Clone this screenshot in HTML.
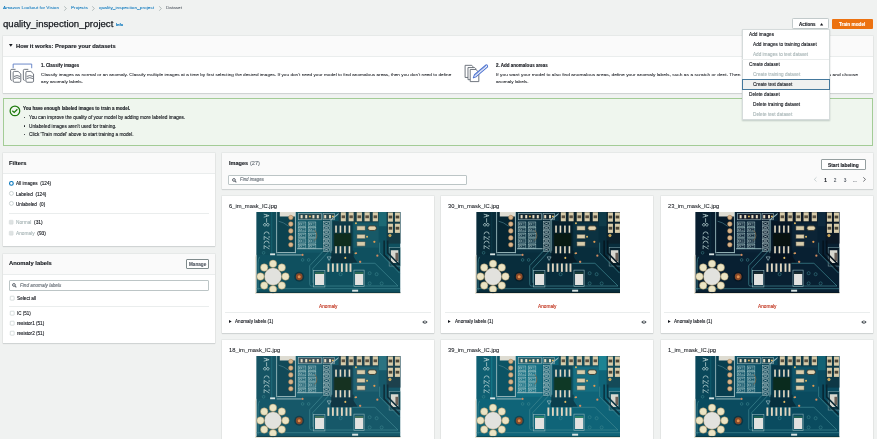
<!DOCTYPE html>
<html><head><meta charset="utf-8">
<style>
*{box-sizing:border-box;margin:0;padding:0}
html,body{width:877px;height:439px;overflow:hidden;background:#f0f2f1;font-family:"Liberation Sans",sans-serif;color:#16191f}
.a{position:absolute;white-space:nowrap;transform-origin:0 0;-webkit-text-stroke:0.12px currentColor}
#root{position:absolute;left:0;top:0;width:877px;height:439px;will-change:transform}
.panel{position:absolute;background:#fff;box-shadow:0 1px 1px 0 rgba(0,28,36,.10),0 0 0 0.6px rgba(0,28,36,.07)}
.ph{position:absolute;left:0;right:0;top:0;background:#fafafa;border-bottom:0.6px solid #eaeded}
</style></head><body><div id="root">
<svg width="0" height="0" style="position:absolute"><defs><symbol id="pcb0" viewBox="0 0 146 82" preserveAspectRatio="none">
<path d="M0 45 L1.6 40 V80 H146 V82 H0Z" fill="#e9e4d6"/>
<g transform="translate(1.6,0) scale(1.0025,1.016)">
<rect x="0" y="0" width="143.7" height="79.4" fill="#0f505f"/>
<!-- left strip -->
<rect x="0" y="0" width="19.8" height="42" fill="#0f4c5a"/>
<rect x="14.5" y="0" width="1.2" height="42" fill="#155f6b"/>
<g fill="none" stroke="#b9d2d2" stroke-width="0.75" stroke-linecap="round">
<path d="M7.5 2.2 L12.5 3.6 L7.5 5 M10 2.9 V4.3"/>
<path d="M10 6.5 V10"/>
<path d="M8.2 11.3 a1.4 1.2 0 1 0 0.01 0 M11.2 11.3 a1.4 1.2 0 1 0 0.01 0"/>
<path d="M12.5 21.5 A2.5 2 0 0 0 7.5 21.5"/>
<path d="M7.5 24 L12.5 27 M7.5 24.5 V27 M12.5 24 V25"/>
<path d="M12.5 30.5 A2.5 2 0 0 0 7.5 30.5"/>
<path d="M7.5 33 L12.5 36 M7.5 33.5 V36 M12.5 33 V34"/>
</g>

<rect x="19.6" y="0" width="1.1" height="40.5" fill="#9ab8bc"/>
<rect x="20.7" y="0" width="17.6" height="39.6" fill="#0c424f"/>
<rect x="20.7" y="39.3" width="18.6" height="1" fill="#9ab8bc"/>
<rect x="38.3" y="0" width="1" height="40.3" fill="#9ab8bc"/>
<path d="M22 9 q5 1 10 5" stroke="#4f8590" stroke-width="0.6" fill="none"/>
<rect x="23.2" y="0" width="15.5" height="4.4" fill="#dedcd2"/>
<g fill="#d9b58c" stroke="#a87a4c" stroke-width="0.5">
<circle cx="34.2" cy="5.4" r="2.2"/><circle cx="34.2" cy="11.8" r="2.3"/><circle cx="34.2" cy="18.6" r="2.3"/><circle cx="34.2" cy="25.4" r="2.3"/><circle cx="34.2" cy="32.1" r="2.3"/>
</g>
<!-- text block R18 R16 -->
<rect x="40" y="0" width="26" height="40" fill="#135867"/>
<rect x="41.8" y="1.6" width="23.2" height="6" fill="#2a494f" stroke="#9ab8bc" stroke-width="0.6"/>
<g fill="#e6dcc4"><rect x="44" y="3" width="2" height="3.2"/><rect x="48.6" y="3" width="2" height="3.2"/><rect x="55.8" y="3" width="2" height="3.2"/><rect x="60.2" y="3" width="2" height="3.2"/></g>
<circle cx="53.3" cy="4.5" r="1" fill="#e0b860"/>
<g><rect x="41.6" y="9.8" width="7.6" height="4.2" fill="none" stroke="#a9c9ca" stroke-width="0.55"/><path d="M42.800000000000004 11.0 h2 v1.8 h-2z M45.800000000000004 11.0 h2.2 M45.800000000000004 12.8 h2.2" fill="none" stroke="#c8dcdc" stroke-width="0.5"/><rect x="51.6" y="9.8" width="7.6" height="4.2" fill="none" stroke="#a9c9ca" stroke-width="0.55"/><path d="M52.800000000000004 11.0 h2 v1.8 h-2z M55.800000000000004 11.0 h2.2 M55.800000000000004 12.8 h2.2" fill="none" stroke="#c8dcdc" stroke-width="0.5"/><rect x="41.6" y="15.3" width="7.6" height="4.2" fill="none" stroke="#a9c9ca" stroke-width="0.55"/><path d="M42.800000000000004 16.5 h2 v1.8 h-2z M45.800000000000004 16.5 h2.2 M45.800000000000004 18.3 h2.2" fill="none" stroke="#c8dcdc" stroke-width="0.5"/><rect x="51.6" y="15.3" width="7.6" height="4.2" fill="none" stroke="#a9c9ca" stroke-width="0.55"/><path d="M52.800000000000004 16.5 h2 v1.8 h-2z M55.800000000000004 16.5 h2.2 M55.800000000000004 18.3 h2.2" fill="none" stroke="#c8dcdc" stroke-width="0.5"/><rect x="41.6" y="20.8" width="7.6" height="4.2" fill="none" stroke="#a9c9ca" stroke-width="0.55"/><path d="M42.800000000000004 22.0 h2 v1.8 h-2z M45.800000000000004 22.0 h2.2 M45.800000000000004 23.8 h2.2" fill="none" stroke="#c8dcdc" stroke-width="0.5"/><rect x="51.6" y="20.8" width="7.6" height="4.2" fill="none" stroke="#a9c9ca" stroke-width="0.55"/><path d="M52.800000000000004 22.0 h2 v1.8 h-2z M55.800000000000004 22.0 h2.2 M55.800000000000004 23.8 h2.2" fill="none" stroke="#c8dcdc" stroke-width="0.5"/><rect x="41.6" y="26.3" width="7.6" height="4.2" fill="none" stroke="#a9c9ca" stroke-width="0.55"/><path d="M42.800000000000004 27.5 h2 v1.8 h-2z M45.800000000000004 27.5 h2.2 M45.800000000000004 29.3 h2.2" fill="none" stroke="#c8dcdc" stroke-width="0.5"/><rect x="51.6" y="26.3" width="7.6" height="4.2" fill="none" stroke="#a9c9ca" stroke-width="0.55"/><path d="M52.800000000000004 27.5 h2 v1.8 h-2z M55.800000000000004 27.5 h2.2 M55.800000000000004 29.3 h2.2" fill="none" stroke="#c8dcdc" stroke-width="0.5"/><rect x="41.6" y="31.6" width="7.6" height="4.2" fill="none" stroke="#a9c9ca" stroke-width="0.55"/><path d="M42.800000000000004 32.800000000000004 h2 v1.8 h-2z M45.800000000000004 32.800000000000004 h2.2 M45.800000000000004 34.6 h2.2" fill="none" stroke="#c8dcdc" stroke-width="0.5"/><rect x="51.6" y="31.6" width="7.6" height="4.2" fill="none" stroke="#a9c9ca" stroke-width="0.55"/><path d="M52.800000000000004 32.800000000000004 h2 v1.8 h-2z M55.800000000000004 32.800000000000004 h2.2 M55.800000000000004 34.6 h2.2" fill="none" stroke="#c8dcdc" stroke-width="0.5"/></g>
<path d="M58 18 a5 6 0 0 1 0 10" stroke="#7a6a50" stroke-width="0.8" fill="none"/>
<rect x="40.5" y="35.5" width="30" height="1" fill="#8fb3b8"/>
<!-- small resistor column -->
<rect x="66" y="0" width="8" height="40" fill="#0f4755"/>
<rect x="66.4" y="1.6" width="11.6" height="6" fill="#2a494f" stroke="#9ab8bc" stroke-width="0.6"/>
<g fill="#e6dcc4"><rect x="67.6" y="3" width="2" height="3.2"/><rect x="72.4" y="3" width="2" height="3.2"/></g>
<circle cx="76.3" cy="4.5" r="1" fill="#e0b860"/>
<g><rect x="66.8" y="9.5" width="6" height="3.4" fill="none" stroke="#b8cfd0" stroke-width="0.5"/><path d="M67.6 10.1 l4.4 2.2 M67.6 12.3 l4.4 -2.2" stroke="#d0dede" stroke-width="0.5"/><rect x="66.8" y="13.8" width="6" height="3.4" fill="none" stroke="#b8cfd0" stroke-width="0.5"/><path d="M67.6 14.4 l4.4 2.2 M67.6 16.6 l4.4 -2.2" stroke="#d0dede" stroke-width="0.5"/><rect x="66.8" y="18.1" width="6" height="3.4" fill="none" stroke="#b8cfd0" stroke-width="0.5"/><path d="M67.6 18.700000000000003 l4.4 2.2 M67.6 20.900000000000002 l4.4 -2.2" stroke="#d0dede" stroke-width="0.5"/><rect x="66.8" y="22.4" width="6" height="3.4" fill="none" stroke="#b8cfd0" stroke-width="0.5"/><path d="M67.6 23.0 l4.4 2.2 M67.6 25.2 l4.4 -2.2" stroke="#d0dede" stroke-width="0.5"/><rect x="66.8" y="26.7" width="6" height="3.4" fill="none" stroke="#b8cfd0" stroke-width="0.5"/><path d="M67.6 27.3 l4.4 2.2 M67.6 29.5 l4.4 -2.2" stroke="#d0dede" stroke-width="0.5"/><rect x="66.8" y="31.0" width="6" height="3.4" fill="none" stroke="#b8cfd0" stroke-width="0.5"/><path d="M67.6 31.6 l4.4 2.2 M67.6 33.8 l4.4 -2.2" stroke="#d0dede" stroke-width="0.5"/><rect x="66.8" y="35.3" width="6" height="3.4" fill="none" stroke="#b8cfd0" stroke-width="0.5"/><path d="M67.6 35.9 l4.4 2.2 M67.6 38.099999999999994 l4.4 -2.2" stroke="#d0dede" stroke-width="0.5"/></g>
<rect x="73.9" y="8" width="1" height="32" fill="#8fb3b8"/>
<path d="M74 8 L84 0" stroke="#9ab8bc" stroke-width="1" fill="none"/>
<!-- IC -->
<path d="M75 38 H97 V44 L101 50 H74Z" fill="#0b323e"/>
<rect x="76" y="9" width="20" height="32" fill="#0e3946"/>
<g fill="#e6dcc4">
<rect x="78.6" y="13.3" width="1.6" height="7"/><rect x="83" y="13.3" width="1.6" height="7"/><rect x="87.5" y="13.3" width="1.6" height="7"/><rect x="92" y="13.3" width="1.6" height="7"/>
<rect x="78.6" y="33.5" width="1.6" height="7"/><rect x="83" y="33.5" width="1.6" height="7"/><rect x="87.5" y="33.5" width="1.6" height="7"/><rect x="92" y="33.5" width="1.6" height="7"/>
</g>
<rect x="77.6" y="21" width="17" height="12.4" fill="#0f2d1e"/>
<!-- top resistor row -->
<rect x="82" y="0" width="42" height="10" fill="#173e48"/>
<g fill="#d8ccaa">
<rect x="84.2" y="0.3" width="5" height="8.8"/><rect x="92" y="0.3" width="5" height="8.8"/><rect x="100.1" y="0.3" width="5.2" height="8.8"/><rect x="107.9" y="0.3" width="5.2" height="8.8"/><rect x="116.1" y="0.3" width="5.2" height="8.8"/>
</g>
<g fill="#5a5040"><rect x="85" y="3.3" width="3.4" height="2.8"/><rect x="92.8" y="3.3" width="3.4" height="2.8"/><rect x="100.9" y="3.3" width="3.6" height="2.8"/><rect x="108.7" y="3.3" width="3.6" height="2.8"/><rect x="116.9" y="3.3" width="3.6" height="2.8"/></g>
<rect x="122" y="0" width="8.6" height="14" fill="#1d6974"/>
<!-- right resistor columns -->
<rect x="130" y="0" width="14" height="31" fill="#143b46"/>
<g fill="#d8ccaa">
<rect x="131.3" y="0.5" width="5" height="9"/><rect x="138.3" y="0.5" width="5" height="9"/>
<rect x="131.3" y="11.5" width="5" height="9"/><rect x="138.3" y="11.5" width="5" height="9"/>
</g>
<g fill="#4a4436"><rect x="132" y="3.5" width="3.6" height="2.8"/><rect x="139" y="3.5" width="3.6" height="2.8"/><rect x="132" y="14.5" width="3.6" height="2.8"/><rect x="139" y="14.5" width="3.6" height="2.8"/></g>
<circle cx="133.3" cy="23" r="1.3" fill="#c9a050" stroke="#e8c878" stroke-width="0.5"/>
<!-- mid horiz components -->
<rect x="97" y="11" width="25" height="24" fill="#175967"/>
<g fill="#d8ccaa" stroke="#1a3b42" stroke-width="0.6">
<rect x="100.1" y="13.6" width="8.6" height="4.5" rx="0.6"/>
<rect x="100.1" y="21.8" width="8.6" height="4.5" rx="0.6"/>
<rect x="100.1" y="29" width="8.6" height="4.5" rx="0.6"/>
</g>
<rect x="111.2" y="13.6" width="8.6" height="4.5" rx="2.2" fill="#e2d4b0" stroke="#2a2a22" stroke-width="0.8"/>
<g fill="#e0b860"><circle cx="99.3" cy="11.1" r="1"/><circle cx="110.4" cy="24.2" r="1"/></g>
<circle cx="117.7" cy="29.2" r="1.1" fill="#e09a50"/>
<rect x="132.5" y="35" width="11.2" height="18" fill="#0c3d4a" stroke="#8fb3b8" stroke-width="0.5"/>
<rect x="134.2" y="37.5" width="7.5" height="12.5" fill="#d8d8d0"/>
<rect x="138.8" y="40" width="2.8" height="8" fill="#6a6058"/>
<!-- traces -->
<g stroke="#3f8690" stroke-width="0.7" fill="none">
<path d="M68.6 36.3 L53.1 52.7 V71 Q53.1 72.6 54.7 72.6 H141.4 L118.3 50.3 H95.8"/><path d="M73.1 37.7 L56.2 55.5 V69.5"/>
<path d="M0 75.2 H143.5"/>
<path d="M3 44 Q1.5 46 1.5 50 V77"/>
<path d="M123 30 V40 L143 60"/>
</g>
<g stroke="#0a2934" stroke-width="1.6" fill="none"><path d="M127.5 28 V42 L143 57.5"/><path d="M131 28 V40 L143 52"/></g>
<g fill="#d8e4e4"><rect x="95.5" y="76.2" width="6" height="2"/><rect x="13.5" y="40.6" width="5" height="1.8"/></g>
<rect x="20" y="41.6" width="25" height="1" fill="#8fb3b8"/>
<circle cx="45.9" cy="42.1" r="1.1" fill="#d08a60"/>
<circle cx="120.7" cy="42.8" r="1.1" fill="#d08a60"/>
<circle cx="103.6" cy="48.8" r="1.1" fill="#d08a60"/>
<circle cx="98.8" cy="40.5" r="0.9" fill="#e0b860"/>
<g fill="#e0b860"><circle cx="88.7" cy="45" r="1"/></g>
<g fill="#d08a60"><circle cx="99.6" cy="40.4" r="0.9"/><circle cx="103.3" cy="48.6" r="0.9"/></g>
<!-- pins row -->
<g fill="#e2d6c0">
<rect x="70.8" y="50.5" width="1.9" height="8.2"/><rect x="75.3" y="50.5" width="1.9" height="8.2"/><rect x="79.8" y="50.5" width="1.9" height="8.2"/><rect x="84.3" y="50.5" width="1.9" height="8.2"/><rect x="88.9" y="50.5" width="1.9" height="8.2"/><rect x="92.9" y="50.5" width="1.9" height="8.2"/>
</g>
<path d="M70.5 44 h4 l-2 3.5z" fill="none" stroke="#a8c4c8" stroke-width="0.6"/>
<!-- SMD white -->
<rect x="56.8" y="57.5" width="11.5" height="16" fill="none" stroke="#8fb3b8" stroke-width="0.6"/>
<rect x="58.4" y="60.6" width="9" height="11" fill="#e2e2e0"/>
<rect x="58.4" y="58.8" width="9" height="2" fill="#2e6955"/>
<rect x="97.3" y="57" width="10.2" height="16" fill="none" stroke="#8fb3b8" stroke-width="0.6"/>
<rect x="98.4" y="60.6" width="8.2" height="11" fill="#e2e2e0"/>
<rect x="98.4" y="58.8" width="8.2" height="2" fill="#2e6955"/>
<!-- big pad -->
<g fill="#ebe4c4" stroke="#9a8050" stroke-width="0.45">
<circle cx="16.4" cy="50.8" r="3.7"/><circle cx="25.2" cy="54.5" r="3.7"/><circle cx="28.9" cy="63.3" r="3.7"/><circle cx="25.2" cy="72.1" r="3.7"/><circle cx="16.4" cy="75.8" r="3.7"/><circle cx="7.6" cy="72.1" r="3.7"/><circle cx="3.9" cy="63.3" r="3.7"/><circle cx="7.6" cy="54.5" r="3.7"/>
</g>
<circle cx="16.4" cy="63.3" r="8.6" fill="#e2e2de" stroke="#9a8050" stroke-width="0.45"/>
<circle cx="42.6" cy="63.5" r="5" fill="#0c3946"/>
<circle cx="42.6" cy="63.5" r="3.4" fill="#8a4a28"/>
<circle cx="42.6" cy="63.5" r="1.5" fill="#e09050"/>
<g fill="none" stroke="#3f8a92" stroke-width="0.5">
<circle cx="113" cy="60" r="1.5"/><circle cx="120" cy="61" r="1.5"/><circle cx="113" cy="70" r="1.5"/><circle cx="125" cy="70" r="1.5"/>
<circle cx="84" cy="61" r="1.5"/><circle cx="46" cy="47" r="1.3"/><circle cx="52" cy="47" r="1.3"/><circle cx="7" cy="40" r="1.3"/>
</g>
<rect x="0" y="78.4" width="143.7" height="1" fill="#0e3b46"/>
</g>
</symbol><symbol id="pcb1" viewBox="0 0 146 82" preserveAspectRatio="none">
<path d="M0 45 L1.6 40 V80 H146 V82 H0Z" fill="#e9e4d6"/>
<g transform="translate(1.6,0) scale(1.0025,1.016)">
<rect x="0" y="0" width="143.7" height="79.4" fill="#082d3c"/>
<!-- left strip -->
<rect x="0" y="0" width="19.8" height="42" fill="#082b39"/>
<rect x="14.5" y="0" width="1.2" height="42" fill="#0b3543"/>
<g fill="none" stroke="#b9d2d2" stroke-width="0.75" stroke-linecap="round">
<path d="M7.5 2.2 L12.5 3.6 L7.5 5 M10 2.9 V4.3"/>
<path d="M10 6.5 V10"/>
<path d="M8.2 11.3 a1.4 1.2 0 1 0 0.01 0 M11.2 11.3 a1.4 1.2 0 1 0 0.01 0"/>
<path d="M12.5 21.5 A2.5 2 0 0 0 7.5 21.5"/>
<path d="M7.5 24 L12.5 27 M7.5 24.5 V27 M12.5 24 V25"/>
<path d="M12.5 30.5 A2.5 2 0 0 0 7.5 30.5"/>
<path d="M7.5 33 L12.5 36 M7.5 33.5 V36 M12.5 33 V34"/>
</g>

<rect x="19.6" y="0" width="1.1" height="40.5" fill="#9ab8bc"/>
<rect x="20.7" y="0" width="17.6" height="39.6" fill="#062532"/>
<rect x="20.7" y="39.3" width="18.6" height="1" fill="#9ab8bc"/>
<rect x="38.3" y="0" width="1" height="40.3" fill="#9ab8bc"/>
<path d="M22 9 q5 1 10 5" stroke="#4f8590" stroke-width="0.6" fill="none"/>
<rect x="23.2" y="0" width="15.5" height="4.4" fill="#dedcd2"/>
<g fill="#d9b58c" stroke="#a87a4c" stroke-width="0.5">
<circle cx="34.2" cy="5.4" r="2.2"/><circle cx="34.2" cy="11.8" r="2.3"/><circle cx="34.2" cy="18.6" r="2.3"/><circle cx="34.2" cy="25.4" r="2.3"/><circle cx="34.2" cy="32.1" r="2.3"/>
</g>
<!-- text block R18 R16 -->
<rect x="40" y="0" width="26" height="40" fill="#0a3141"/>
<rect x="41.8" y="1.6" width="23.2" height="6" fill="#162932" stroke="#9ab8bc" stroke-width="0.6"/>
<g fill="#e6dcc4"><rect x="44" y="3" width="2" height="3.2"/><rect x="48.6" y="3" width="2" height="3.2"/><rect x="55.8" y="3" width="2" height="3.2"/><rect x="60.2" y="3" width="2" height="3.2"/></g>
<circle cx="53.3" cy="4.5" r="1" fill="#e0b860"/>
<g><rect x="41.6" y="9.8" width="7.6" height="4.2" fill="none" stroke="#a9c9ca" stroke-width="0.55"/><path d="M42.800000000000004 11.0 h2 v1.8 h-2z M45.800000000000004 11.0 h2.2 M45.800000000000004 12.8 h2.2" fill="none" stroke="#c8dcdc" stroke-width="0.5"/><rect x="51.6" y="9.8" width="7.6" height="4.2" fill="none" stroke="#a9c9ca" stroke-width="0.55"/><path d="M52.800000000000004 11.0 h2 v1.8 h-2z M55.800000000000004 11.0 h2.2 M55.800000000000004 12.8 h2.2" fill="none" stroke="#c8dcdc" stroke-width="0.5"/><rect x="41.6" y="15.3" width="7.6" height="4.2" fill="none" stroke="#a9c9ca" stroke-width="0.55"/><path d="M42.800000000000004 16.5 h2 v1.8 h-2z M45.800000000000004 16.5 h2.2 M45.800000000000004 18.3 h2.2" fill="none" stroke="#c8dcdc" stroke-width="0.5"/><rect x="51.6" y="15.3" width="7.6" height="4.2" fill="none" stroke="#a9c9ca" stroke-width="0.55"/><path d="M52.800000000000004 16.5 h2 v1.8 h-2z M55.800000000000004 16.5 h2.2 M55.800000000000004 18.3 h2.2" fill="none" stroke="#c8dcdc" stroke-width="0.5"/><rect x="41.6" y="20.8" width="7.6" height="4.2" fill="none" stroke="#a9c9ca" stroke-width="0.55"/><path d="M42.800000000000004 22.0 h2 v1.8 h-2z M45.800000000000004 22.0 h2.2 M45.800000000000004 23.8 h2.2" fill="none" stroke="#c8dcdc" stroke-width="0.5"/><rect x="51.6" y="20.8" width="7.6" height="4.2" fill="none" stroke="#a9c9ca" stroke-width="0.55"/><path d="M52.800000000000004 22.0 h2 v1.8 h-2z M55.800000000000004 22.0 h2.2 M55.800000000000004 23.8 h2.2" fill="none" stroke="#c8dcdc" stroke-width="0.5"/><rect x="41.6" y="26.3" width="7.6" height="4.2" fill="none" stroke="#a9c9ca" stroke-width="0.55"/><path d="M42.800000000000004 27.5 h2 v1.8 h-2z M45.800000000000004 27.5 h2.2 M45.800000000000004 29.3 h2.2" fill="none" stroke="#c8dcdc" stroke-width="0.5"/><rect x="51.6" y="26.3" width="7.6" height="4.2" fill="none" stroke="#a9c9ca" stroke-width="0.55"/><path d="M52.800000000000004 27.5 h2 v1.8 h-2z M55.800000000000004 27.5 h2.2 M55.800000000000004 29.3 h2.2" fill="none" stroke="#c8dcdc" stroke-width="0.5"/><rect x="41.6" y="31.6" width="7.6" height="4.2" fill="none" stroke="#a9c9ca" stroke-width="0.55"/><path d="M42.800000000000004 32.800000000000004 h2 v1.8 h-2z M45.800000000000004 32.800000000000004 h2.2 M45.800000000000004 34.6 h2.2" fill="none" stroke="#c8dcdc" stroke-width="0.5"/><rect x="51.6" y="31.6" width="7.6" height="4.2" fill="none" stroke="#a9c9ca" stroke-width="0.55"/><path d="M52.800000000000004 32.800000000000004 h2 v1.8 h-2z M55.800000000000004 32.800000000000004 h2.2 M55.800000000000004 34.6 h2.2" fill="none" stroke="#c8dcdc" stroke-width="0.5"/></g>
<path d="M58 18 a5 6 0 0 1 0 10" stroke="#7a6a50" stroke-width="0.8" fill="none"/>
<rect x="40.5" y="35.5" width="30" height="1" fill="#8fb3b8"/>
<!-- small resistor column -->
<rect x="66" y="0" width="8" height="40" fill="#082836"/>
<rect x="66.4" y="1.6" width="11.6" height="6" fill="#162932" stroke="#9ab8bc" stroke-width="0.6"/>
<g fill="#e6dcc4"><rect x="67.6" y="3" width="2" height="3.2"/><rect x="72.4" y="3" width="2" height="3.2"/></g>
<circle cx="76.3" cy="4.5" r="1" fill="#e0b860"/>
<g><rect x="66.8" y="9.5" width="6" height="3.4" fill="none" stroke="#b8cfd0" stroke-width="0.5"/><path d="M67.6 10.1 l4.4 2.2 M67.6 12.3 l4.4 -2.2" stroke="#d0dede" stroke-width="0.5"/><rect x="66.8" y="13.8" width="6" height="3.4" fill="none" stroke="#b8cfd0" stroke-width="0.5"/><path d="M67.6 14.4 l4.4 2.2 M67.6 16.6 l4.4 -2.2" stroke="#d0dede" stroke-width="0.5"/><rect x="66.8" y="18.1" width="6" height="3.4" fill="none" stroke="#b8cfd0" stroke-width="0.5"/><path d="M67.6 18.700000000000003 l4.4 2.2 M67.6 20.900000000000002 l4.4 -2.2" stroke="#d0dede" stroke-width="0.5"/><rect x="66.8" y="22.4" width="6" height="3.4" fill="none" stroke="#b8cfd0" stroke-width="0.5"/><path d="M67.6 23.0 l4.4 2.2 M67.6 25.2 l4.4 -2.2" stroke="#d0dede" stroke-width="0.5"/><rect x="66.8" y="26.7" width="6" height="3.4" fill="none" stroke="#b8cfd0" stroke-width="0.5"/><path d="M67.6 27.3 l4.4 2.2 M67.6 29.5 l4.4 -2.2" stroke="#d0dede" stroke-width="0.5"/><rect x="66.8" y="31.0" width="6" height="3.4" fill="none" stroke="#b8cfd0" stroke-width="0.5"/><path d="M67.6 31.6 l4.4 2.2 M67.6 33.8 l4.4 -2.2" stroke="#d0dede" stroke-width="0.5"/><rect x="66.8" y="35.3" width="6" height="3.4" fill="none" stroke="#b8cfd0" stroke-width="0.5"/><path d="M67.6 35.9 l4.4 2.2 M67.6 38.099999999999994 l4.4 -2.2" stroke="#d0dede" stroke-width="0.5"/></g>
<rect x="73.9" y="8" width="1" height="32" fill="#8fb3b8"/>
<path d="M74 8 L84 0" stroke="#9ab8bc" stroke-width="1" fill="none"/>
<!-- IC -->
<path d="M75 38 H97 V44 L101 50 H74Z" fill="#061c27"/>
<rect x="76" y="9" width="20" height="32" fill="#07202c"/>
<g fill="#e6dcc4">
<rect x="78.6" y="13.3" width="1.6" height="7"/><rect x="83" y="13.3" width="1.6" height="7"/><rect x="87.5" y="13.3" width="1.6" height="7"/><rect x="92" y="13.3" width="1.6" height="7"/>
<rect x="78.6" y="33.5" width="1.6" height="7"/><rect x="83" y="33.5" width="1.6" height="7"/><rect x="87.5" y="33.5" width="1.6" height="7"/><rect x="92" y="33.5" width="1.6" height="7"/>
</g>
<rect x="77.6" y="21" width="17" height="12.4" fill="#081a13"/>
<!-- top resistor row -->
<rect x="82" y="0" width="42" height="10" fill="#0c232d"/>
<g fill="#d8ccaa">
<rect x="84.2" y="0.3" width="5" height="8.8"/><rect x="92" y="0.3" width="5" height="8.8"/><rect x="100.1" y="0.3" width="5.2" height="8.8"/><rect x="107.9" y="0.3" width="5.2" height="8.8"/><rect x="116.1" y="0.3" width="5.2" height="8.8"/>
</g>
<g fill="#5a5040"><rect x="85" y="3.3" width="3.4" height="2.8"/><rect x="92.8" y="3.3" width="3.4" height="2.8"/><rect x="100.9" y="3.3" width="3.6" height="2.8"/><rect x="108.7" y="3.3" width="3.6" height="2.8"/><rect x="116.9" y="3.3" width="3.6" height="2.8"/></g>
<rect x="122" y="0" width="8.6" height="14" fill="#0f3b49"/>
<!-- right resistor columns -->
<rect x="130" y="0" width="14" height="31" fill="#0b212c"/>
<g fill="#d8ccaa">
<rect x="131.3" y="0.5" width="5" height="9"/><rect x="138.3" y="0.5" width="5" height="9"/>
<rect x="131.3" y="11.5" width="5" height="9"/><rect x="138.3" y="11.5" width="5" height="9"/>
</g>
<g fill="#4a4436"><rect x="132" y="3.5" width="3.6" height="2.8"/><rect x="139" y="3.5" width="3.6" height="2.8"/><rect x="132" y="14.5" width="3.6" height="2.8"/><rect x="139" y="14.5" width="3.6" height="2.8"/></g>
<circle cx="133.3" cy="23" r="1.3" fill="#c9a050" stroke="#e8c878" stroke-width="0.5"/>
<!-- mid horiz components -->
<rect x="97" y="11" width="25" height="24" fill="#0c3241"/>
<g fill="#d8ccaa" stroke="#0e212a" stroke-width="0.6">
<rect x="100.1" y="13.6" width="8.6" height="4.5" rx="0.6"/>
<rect x="100.1" y="21.8" width="8.6" height="4.5" rx="0.6"/>
<rect x="100.1" y="29" width="8.6" height="4.5" rx="0.6"/>
</g>
<rect x="111.2" y="13.6" width="8.6" height="4.5" rx="2.2" fill="#e2d4b0" stroke="#2a2a22" stroke-width="0.8"/>
<g fill="#e0b860"><circle cx="99.3" cy="11.1" r="1"/><circle cx="110.4" cy="24.2" r="1"/></g>
<circle cx="117.7" cy="29.2" r="1.1" fill="#e09a50"/>
<rect x="132.5" y="35" width="11.2" height="18" fill="#06222f" stroke="#8fb3b8" stroke-width="0.5"/>
<rect x="134.2" y="37.5" width="7.5" height="12.5" fill="#d8d8d0"/>
<rect x="138.8" y="40" width="2.8" height="8" fill="#6a6058"/>
<!-- traces -->
<g stroke="#3f8690" stroke-width="0.7" fill="none">
<path d="M68.6 36.3 L53.1 52.7 V71 Q53.1 72.6 54.7 72.6 H141.4 L118.3 50.3 H95.8"/><path d="M73.1 37.7 L56.2 55.5 V69.5"/>
<path d="M0 75.2 H143.5"/>
<path d="M3 44 Q1.5 46 1.5 50 V77"/>
<path d="M123 30 V40 L143 60"/>
</g>
<g stroke="#051721" stroke-width="1.6" fill="none"><path d="M127.5 28 V42 L143 57.5"/><path d="M131 28 V40 L143 52"/></g>
<g fill="#d8e4e4"><rect x="95.5" y="76.2" width="6" height="2"/><rect x="13.5" y="40.6" width="5" height="1.8"/></g>
<rect x="20" y="41.6" width="25" height="1" fill="#8fb3b8"/>
<circle cx="45.9" cy="42.1" r="1.1" fill="#d08a60"/>
<circle cx="120.7" cy="42.8" r="1.1" fill="#d08a60"/>
<circle cx="103.6" cy="48.8" r="1.1" fill="#d08a60"/>
<circle cx="98.8" cy="40.5" r="0.9" fill="#e0b860"/>
<g fill="#e0b860"><circle cx="88.7" cy="45" r="1"/></g>
<g fill="#d08a60"><circle cx="99.6" cy="40.4" r="0.9"/><circle cx="103.3" cy="48.6" r="0.9"/></g>
<!-- pins row -->
<g fill="#e2d6c0">
<rect x="70.8" y="50.5" width="1.9" height="8.2"/><rect x="75.3" y="50.5" width="1.9" height="8.2"/><rect x="79.8" y="50.5" width="1.9" height="8.2"/><rect x="84.3" y="50.5" width="1.9" height="8.2"/><rect x="88.9" y="50.5" width="1.9" height="8.2"/><rect x="92.9" y="50.5" width="1.9" height="8.2"/>
</g>
<path d="M70.5 44 h4 l-2 3.5z" fill="none" stroke="#a8c4c8" stroke-width="0.6"/>
<!-- SMD white -->
<rect x="56.8" y="57.5" width="11.5" height="16" fill="none" stroke="#8fb3b8" stroke-width="0.6"/>
<rect x="58.4" y="60.6" width="9" height="11" fill="#e2e2e0"/>
<rect x="58.4" y="58.8" width="9" height="2" fill="#193b36"/>
<rect x="97.3" y="57" width="10.2" height="16" fill="none" stroke="#8fb3b8" stroke-width="0.6"/>
<rect x="98.4" y="60.6" width="8.2" height="11" fill="#e2e2e0"/>
<rect x="98.4" y="58.8" width="8.2" height="2" fill="#193b36"/>
<!-- big pad -->
<g fill="#ebe4c4" stroke="#9a8050" stroke-width="0.45">
<circle cx="16.4" cy="50.8" r="3.7"/><circle cx="25.2" cy="54.5" r="3.7"/><circle cx="28.9" cy="63.3" r="3.7"/><circle cx="25.2" cy="72.1" r="3.7"/><circle cx="16.4" cy="75.8" r="3.7"/><circle cx="7.6" cy="72.1" r="3.7"/><circle cx="3.9" cy="63.3" r="3.7"/><circle cx="7.6" cy="54.5" r="3.7"/>
</g>
<circle cx="16.4" cy="63.3" r="8.6" fill="#e2e2de" stroke="#9a8050" stroke-width="0.45"/>
<circle cx="42.6" cy="63.5" r="5" fill="#06202c"/>
<circle cx="42.6" cy="63.5" r="3.4" fill="#8a4a28"/>
<circle cx="42.6" cy="63.5" r="1.5" fill="#e09050"/>
<g fill="none" stroke="#3f8a92" stroke-width="0.5">
<circle cx="113" cy="60" r="1.5"/><circle cx="120" cy="61" r="1.5"/><circle cx="113" cy="70" r="1.5"/><circle cx="125" cy="70" r="1.5"/>
<circle cx="84" cy="61" r="1.5"/><circle cx="46" cy="47" r="1.3"/><circle cx="52" cy="47" r="1.3"/><circle cx="7" cy="40" r="1.3"/>
</g>
<rect x="0" y="78.4" width="143.7" height="1" fill="#07212c"/>
</g>
</symbol><symbol id="pcb2" viewBox="0 0 146 82" preserveAspectRatio="none">
<path d="M0 45 L1.6 40 V80 H146 V82 H0Z" fill="#e9e4d6"/>
<g transform="translate(1.6,0) scale(1.0025,1.016)">
<rect x="0" y="0" width="143.7" height="79.4" fill="#082032"/>
<!-- left strip -->
<rect x="0" y="0" width="19.8" height="42" fill="#081e2f"/>
<rect x="14.5" y="0" width="1.2" height="42" fill="#0b2638"/>
<g fill="none" stroke="#b9d2d2" stroke-width="0.75" stroke-linecap="round">
<path d="M7.5 2.2 L12.5 3.6 L7.5 5 M10 2.9 V4.3"/>
<path d="M10 6.5 V10"/>
<path d="M8.2 11.3 a1.4 1.2 0 1 0 0.01 0 M11.2 11.3 a1.4 1.2 0 1 0 0.01 0"/>
<path d="M12.5 21.5 A2.5 2 0 0 0 7.5 21.5"/>
<path d="M7.5 24 L12.5 27 M7.5 24.5 V27 M12.5 24 V25"/>
<path d="M12.5 30.5 A2.5 2 0 0 0 7.5 30.5"/>
<path d="M7.5 33 L12.5 36 M7.5 33.5 V36 M12.5 33 V34"/>
</g>

<rect x="19.6" y="0" width="1.1" height="40.5" fill="#9ab8bc"/>
<rect x="20.7" y="0" width="17.6" height="39.6" fill="#061a2a"/>
<rect x="20.7" y="39.3" width="18.6" height="1" fill="#9ab8bc"/>
<rect x="38.3" y="0" width="1" height="40.3" fill="#9ab8bc"/>
<path d="M22 9 q5 1 10 5" stroke="#4f8590" stroke-width="0.6" fill="none"/>
<rect x="23.2" y="0" width="15.5" height="4.4" fill="#dedcd2"/>
<g fill="#d9b58c" stroke="#a87a4c" stroke-width="0.5">
<circle cx="34.2" cy="5.4" r="2.2"/><circle cx="34.2" cy="11.8" r="2.3"/><circle cx="34.2" cy="18.6" r="2.3"/><circle cx="34.2" cy="25.4" r="2.3"/><circle cx="34.2" cy="32.1" r="2.3"/>
</g>
<!-- text block R18 R16 -->
<rect x="40" y="0" width="26" height="40" fill="#0a2336"/>
<rect x="41.8" y="1.6" width="23.2" height="6" fill="#161d2a" stroke="#9ab8bc" stroke-width="0.6"/>
<g fill="#e6dcc4"><rect x="44" y="3" width="2" height="3.2"/><rect x="48.6" y="3" width="2" height="3.2"/><rect x="55.8" y="3" width="2" height="3.2"/><rect x="60.2" y="3" width="2" height="3.2"/></g>
<circle cx="53.3" cy="4.5" r="1" fill="#e0b860"/>
<g><rect x="41.6" y="9.8" width="7.6" height="4.2" fill="none" stroke="#a9c9ca" stroke-width="0.55"/><path d="M42.800000000000004 11.0 h2 v1.8 h-2z M45.800000000000004 11.0 h2.2 M45.800000000000004 12.8 h2.2" fill="none" stroke="#c8dcdc" stroke-width="0.5"/><rect x="51.6" y="9.8" width="7.6" height="4.2" fill="none" stroke="#a9c9ca" stroke-width="0.55"/><path d="M52.800000000000004 11.0 h2 v1.8 h-2z M55.800000000000004 11.0 h2.2 M55.800000000000004 12.8 h2.2" fill="none" stroke="#c8dcdc" stroke-width="0.5"/><rect x="41.6" y="15.3" width="7.6" height="4.2" fill="none" stroke="#a9c9ca" stroke-width="0.55"/><path d="M42.800000000000004 16.5 h2 v1.8 h-2z M45.800000000000004 16.5 h2.2 M45.800000000000004 18.3 h2.2" fill="none" stroke="#c8dcdc" stroke-width="0.5"/><rect x="51.6" y="15.3" width="7.6" height="4.2" fill="none" stroke="#a9c9ca" stroke-width="0.55"/><path d="M52.800000000000004 16.5 h2 v1.8 h-2z M55.800000000000004 16.5 h2.2 M55.800000000000004 18.3 h2.2" fill="none" stroke="#c8dcdc" stroke-width="0.5"/><rect x="41.6" y="20.8" width="7.6" height="4.2" fill="none" stroke="#a9c9ca" stroke-width="0.55"/><path d="M42.800000000000004 22.0 h2 v1.8 h-2z M45.800000000000004 22.0 h2.2 M45.800000000000004 23.8 h2.2" fill="none" stroke="#c8dcdc" stroke-width="0.5"/><rect x="51.6" y="20.8" width="7.6" height="4.2" fill="none" stroke="#a9c9ca" stroke-width="0.55"/><path d="M52.800000000000004 22.0 h2 v1.8 h-2z M55.800000000000004 22.0 h2.2 M55.800000000000004 23.8 h2.2" fill="none" stroke="#c8dcdc" stroke-width="0.5"/><rect x="41.6" y="26.3" width="7.6" height="4.2" fill="none" stroke="#a9c9ca" stroke-width="0.55"/><path d="M42.800000000000004 27.5 h2 v1.8 h-2z M45.800000000000004 27.5 h2.2 M45.800000000000004 29.3 h2.2" fill="none" stroke="#c8dcdc" stroke-width="0.5"/><rect x="51.6" y="26.3" width="7.6" height="4.2" fill="none" stroke="#a9c9ca" stroke-width="0.55"/><path d="M52.800000000000004 27.5 h2 v1.8 h-2z M55.800000000000004 27.5 h2.2 M55.800000000000004 29.3 h2.2" fill="none" stroke="#c8dcdc" stroke-width="0.5"/><rect x="41.6" y="31.6" width="7.6" height="4.2" fill="none" stroke="#a9c9ca" stroke-width="0.55"/><path d="M42.800000000000004 32.800000000000004 h2 v1.8 h-2z M45.800000000000004 32.800000000000004 h2.2 M45.800000000000004 34.6 h2.2" fill="none" stroke="#c8dcdc" stroke-width="0.5"/><rect x="51.6" y="31.6" width="7.6" height="4.2" fill="none" stroke="#a9c9ca" stroke-width="0.55"/><path d="M52.800000000000004 32.800000000000004 h2 v1.8 h-2z M55.800000000000004 32.800000000000004 h2.2 M55.800000000000004 34.6 h2.2" fill="none" stroke="#c8dcdc" stroke-width="0.5"/></g>
<path d="M58 18 a5 6 0 0 1 0 10" stroke="#7a6a50" stroke-width="0.8" fill="none"/>
<rect x="40.5" y="35.5" width="30" height="1" fill="#8fb3b8"/>
<!-- small resistor column -->
<rect x="66" y="0" width="8" height="40" fill="#081c2d"/>
<rect x="66.4" y="1.6" width="11.6" height="6" fill="#161d2a" stroke="#9ab8bc" stroke-width="0.6"/>
<g fill="#e6dcc4"><rect x="67.6" y="3" width="2" height="3.2"/><rect x="72.4" y="3" width="2" height="3.2"/></g>
<circle cx="76.3" cy="4.5" r="1" fill="#e0b860"/>
<g><rect x="66.8" y="9.5" width="6" height="3.4" fill="none" stroke="#b8cfd0" stroke-width="0.5"/><path d="M67.6 10.1 l4.4 2.2 M67.6 12.3 l4.4 -2.2" stroke="#d0dede" stroke-width="0.5"/><rect x="66.8" y="13.8" width="6" height="3.4" fill="none" stroke="#b8cfd0" stroke-width="0.5"/><path d="M67.6 14.4 l4.4 2.2 M67.6 16.6 l4.4 -2.2" stroke="#d0dede" stroke-width="0.5"/><rect x="66.8" y="18.1" width="6" height="3.4" fill="none" stroke="#b8cfd0" stroke-width="0.5"/><path d="M67.6 18.700000000000003 l4.4 2.2 M67.6 20.900000000000002 l4.4 -2.2" stroke="#d0dede" stroke-width="0.5"/><rect x="66.8" y="22.4" width="6" height="3.4" fill="none" stroke="#b8cfd0" stroke-width="0.5"/><path d="M67.6 23.0 l4.4 2.2 M67.6 25.2 l4.4 -2.2" stroke="#d0dede" stroke-width="0.5"/><rect x="66.8" y="26.7" width="6" height="3.4" fill="none" stroke="#b8cfd0" stroke-width="0.5"/><path d="M67.6 27.3 l4.4 2.2 M67.6 29.5 l4.4 -2.2" stroke="#d0dede" stroke-width="0.5"/><rect x="66.8" y="31.0" width="6" height="3.4" fill="none" stroke="#b8cfd0" stroke-width="0.5"/><path d="M67.6 31.6 l4.4 2.2 M67.6 33.8 l4.4 -2.2" stroke="#d0dede" stroke-width="0.5"/><rect x="66.8" y="35.3" width="6" height="3.4" fill="none" stroke="#b8cfd0" stroke-width="0.5"/><path d="M67.6 35.9 l4.4 2.2 M67.6 38.099999999999994 l4.4 -2.2" stroke="#d0dede" stroke-width="0.5"/></g>
<rect x="73.9" y="8" width="1" height="32" fill="#8fb3b8"/>
<path d="M74 8 L84 0" stroke="#9ab8bc" stroke-width="1" fill="none"/>
<!-- IC -->
<path d="M75 38 H97 V44 L101 50 H74Z" fill="#061421"/>
<rect x="76" y="9" width="20" height="32" fill="#071725"/>
<g fill="#e6dcc4">
<rect x="78.6" y="13.3" width="1.6" height="7"/><rect x="83" y="13.3" width="1.6" height="7"/><rect x="87.5" y="13.3" width="1.6" height="7"/><rect x="92" y="13.3" width="1.6" height="7"/>
<rect x="78.6" y="33.5" width="1.6" height="7"/><rect x="83" y="33.5" width="1.6" height="7"/><rect x="87.5" y="33.5" width="1.6" height="7"/><rect x="92" y="33.5" width="1.6" height="7"/>
</g>
<rect x="77.6" y="21" width="17" height="12.4" fill="#081210"/>
<!-- top resistor row -->
<rect x="82" y="0" width="42" height="10" fill="#0c1926"/>
<g fill="#d8ccaa">
<rect x="84.2" y="0.3" width="5" height="8.8"/><rect x="92" y="0.3" width="5" height="8.8"/><rect x="100.1" y="0.3" width="5.2" height="8.8"/><rect x="107.9" y="0.3" width="5.2" height="8.8"/><rect x="116.1" y="0.3" width="5.2" height="8.8"/>
</g>
<g fill="#5a5040"><rect x="85" y="3.3" width="3.4" height="2.8"/><rect x="92.8" y="3.3" width="3.4" height="2.8"/><rect x="100.9" y="3.3" width="3.6" height="2.8"/><rect x="108.7" y="3.3" width="3.6" height="2.8"/><rect x="116.9" y="3.3" width="3.6" height="2.8"/></g>
<rect x="122" y="0" width="8.6" height="14" fill="#0f2a3d"/>
<!-- right resistor columns -->
<rect x="130" y="0" width="14" height="31" fill="#0b1825"/>
<g fill="#d8ccaa">
<rect x="131.3" y="0.5" width="5" height="9"/><rect x="138.3" y="0.5" width="5" height="9"/>
<rect x="131.3" y="11.5" width="5" height="9"/><rect x="138.3" y="11.5" width="5" height="9"/>
</g>
<g fill="#4a4436"><rect x="132" y="3.5" width="3.6" height="2.8"/><rect x="139" y="3.5" width="3.6" height="2.8"/><rect x="132" y="14.5" width="3.6" height="2.8"/><rect x="139" y="14.5" width="3.6" height="2.8"/></g>
<circle cx="133.3" cy="23" r="1.3" fill="#c9a050" stroke="#e8c878" stroke-width="0.5"/>
<!-- mid horiz components -->
<rect x="97" y="11" width="25" height="24" fill="#0c2436"/>
<g fill="#d8ccaa" stroke="#0e1823" stroke-width="0.6">
<rect x="100.1" y="13.6" width="8.6" height="4.5" rx="0.6"/>
<rect x="100.1" y="21.8" width="8.6" height="4.5" rx="0.6"/>
<rect x="100.1" y="29" width="8.6" height="4.5" rx="0.6"/>
</g>
<rect x="111.2" y="13.6" width="8.6" height="4.5" rx="2.2" fill="#e2d4b0" stroke="#2a2a22" stroke-width="0.8"/>
<g fill="#e0b860"><circle cx="99.3" cy="11.1" r="1"/><circle cx="110.4" cy="24.2" r="1"/></g>
<circle cx="117.7" cy="29.2" r="1.1" fill="#e09a50"/>
<rect x="132.5" y="35" width="11.2" height="18" fill="#061827" stroke="#8fb3b8" stroke-width="0.5"/>
<rect x="134.2" y="37.5" width="7.5" height="12.5" fill="#d8d8d0"/>
<rect x="138.8" y="40" width="2.8" height="8" fill="#6a6058"/>
<!-- traces -->
<g stroke="#3f8690" stroke-width="0.7" fill="none">
<path d="M68.6 36.3 L53.1 52.7 V71 Q53.1 72.6 54.7 72.6 H141.4 L118.3 50.3 H95.8"/><path d="M73.1 37.7 L56.2 55.5 V69.5"/>
<path d="M0 75.2 H143.5"/>
<path d="M3 44 Q1.5 46 1.5 50 V77"/>
<path d="M123 30 V40 L143 60"/>
</g>
<g stroke="#05111c" stroke-width="1.6" fill="none"><path d="M127.5 28 V42 L143 57.5"/><path d="M131 28 V40 L143 52"/></g>
<g fill="#d8e4e4"><rect x="95.5" y="76.2" width="6" height="2"/><rect x="13.5" y="40.6" width="5" height="1.8"/></g>
<rect x="20" y="41.6" width="25" height="1" fill="#8fb3b8"/>
<circle cx="45.9" cy="42.1" r="1.1" fill="#d08a60"/>
<circle cx="120.7" cy="42.8" r="1.1" fill="#d08a60"/>
<circle cx="103.6" cy="48.8" r="1.1" fill="#d08a60"/>
<circle cx="98.8" cy="40.5" r="0.9" fill="#e0b860"/>
<g fill="#e0b860"><circle cx="88.7" cy="45" r="1"/></g>
<g fill="#d08a60"><circle cx="99.6" cy="40.4" r="0.9"/><circle cx="103.3" cy="48.6" r="0.9"/></g>
<!-- pins row -->
<g fill="#e2d6c0">
<rect x="70.8" y="50.5" width="1.9" height="8.2"/><rect x="75.3" y="50.5" width="1.9" height="8.2"/><rect x="79.8" y="50.5" width="1.9" height="8.2"/><rect x="84.3" y="50.5" width="1.9" height="8.2"/><rect x="88.9" y="50.5" width="1.9" height="8.2"/><rect x="92.9" y="50.5" width="1.9" height="8.2"/>
</g>
<path d="M70.5 44 h4 l-2 3.5z" fill="none" stroke="#a8c4c8" stroke-width="0.6"/>
<!-- SMD white -->
<rect x="56.8" y="57.5" width="11.5" height="16" fill="none" stroke="#8fb3b8" stroke-width="0.6"/>
<rect x="58.4" y="60.6" width="9" height="11" fill="#e2e2e0"/>
<rect x="58.4" y="58.8" width="9" height="2" fill="#192a2d"/>
<rect x="97.3" y="57" width="10.2" height="16" fill="none" stroke="#8fb3b8" stroke-width="0.6"/>
<rect x="98.4" y="60.6" width="8.2" height="11" fill="#e2e2e0"/>
<rect x="98.4" y="58.8" width="8.2" height="2" fill="#192a2d"/>
<!-- big pad -->
<g fill="#ebe4c4" stroke="#9a8050" stroke-width="0.45">
<circle cx="16.4" cy="50.8" r="3.7"/><circle cx="25.2" cy="54.5" r="3.7"/><circle cx="28.9" cy="63.3" r="3.7"/><circle cx="25.2" cy="72.1" r="3.7"/><circle cx="16.4" cy="75.8" r="3.7"/><circle cx="7.6" cy="72.1" r="3.7"/><circle cx="3.9" cy="63.3" r="3.7"/><circle cx="7.6" cy="54.5" r="3.7"/>
</g>
<circle cx="16.4" cy="63.3" r="8.6" fill="#e2e2de" stroke="#9a8050" stroke-width="0.45"/>
<circle cx="42.6" cy="63.5" r="5" fill="#061725"/>
<circle cx="42.6" cy="63.5" r="3.4" fill="#8a4a28"/>
<circle cx="42.6" cy="63.5" r="1.5" fill="#e09050"/>
<g fill="none" stroke="#3f8a92" stroke-width="0.5">
<circle cx="113" cy="60" r="1.5"/><circle cx="120" cy="61" r="1.5"/><circle cx="113" cy="70" r="1.5"/><circle cx="125" cy="70" r="1.5"/>
<circle cx="84" cy="61" r="1.5"/><circle cx="46" cy="47" r="1.3"/><circle cx="52" cy="47" r="1.3"/><circle cx="7" cy="40" r="1.3"/>
</g>
<rect x="0" y="78.4" width="143.7" height="1" fill="#071825"/>
</g>
</symbol><symbol id="pcb3" viewBox="0 0 146 82" preserveAspectRatio="none">
<path d="M0 45 L1.6 40 V80 H146 V82 H0Z" fill="#e9e4d6"/>
<g transform="translate(1.6,0) scale(1.0025,1.016)">
<rect x="0" y="0" width="143.7" height="79.4" fill="#165869"/>
<!-- left strip -->
<rect x="0" y="0" width="19.8" height="42" fill="#165464"/>
<rect x="14.5" y="0" width="1.2" height="42" fill="#1f6876"/>
<g fill="none" stroke="#b9d2d2" stroke-width="0.75" stroke-linecap="round">
<path d="M7.5 2.2 L12.5 3.6 L7.5 5 M10 2.9 V4.3"/>
<path d="M10 6.5 V10"/>
<path d="M8.2 11.3 a1.4 1.2 0 1 0 0.01 0 M11.2 11.3 a1.4 1.2 0 1 0 0.01 0"/>
<path d="M12.5 21.5 A2.5 2 0 0 0 7.5 21.5"/>
<path d="M7.5 24 L12.5 27 M7.5 24.5 V27 M12.5 24 V25"/>
<path d="M12.5 30.5 A2.5 2 0 0 0 7.5 30.5"/>
<path d="M7.5 33 L12.5 36 M7.5 33.5 V36 M12.5 33 V34"/>
</g>

<rect x="19.6" y="0" width="1.1" height="40.5" fill="#9ab8bc"/>
<rect x="20.7" y="0" width="17.6" height="39.6" fill="#124958"/>
<rect x="20.7" y="39.3" width="18.6" height="1" fill="#9ab8bc"/>
<rect x="38.3" y="0" width="1" height="40.3" fill="#9ab8bc"/>
<path d="M22 9 q5 1 10 5" stroke="#4f8590" stroke-width="0.6" fill="none"/>
<rect x="23.2" y="0" width="15.5" height="4.4" fill="#dedcd2"/>
<g fill="#d9b58c" stroke="#a87a4c" stroke-width="0.5">
<circle cx="34.2" cy="5.4" r="2.2"/><circle cx="34.2" cy="11.8" r="2.3"/><circle cx="34.2" cy="18.6" r="2.3"/><circle cx="34.2" cy="25.4" r="2.3"/><circle cx="34.2" cy="32.1" r="2.3"/>
</g>
<!-- text block R18 R16 -->
<rect x="40" y="0" width="26" height="40" fill="#1c6172"/>
<rect x="41.8" y="1.6" width="23.2" height="6" fill="#3e5058" stroke="#9ab8bc" stroke-width="0.6"/>
<g fill="#e6dcc4"><rect x="44" y="3" width="2" height="3.2"/><rect x="48.6" y="3" width="2" height="3.2"/><rect x="55.8" y="3" width="2" height="3.2"/><rect x="60.2" y="3" width="2" height="3.2"/></g>
<circle cx="53.3" cy="4.5" r="1" fill="#e0b860"/>
<g><rect x="41.6" y="9.8" width="7.6" height="4.2" fill="none" stroke="#a9c9ca" stroke-width="0.55"/><path d="M42.800000000000004 11.0 h2 v1.8 h-2z M45.800000000000004 11.0 h2.2 M45.800000000000004 12.8 h2.2" fill="none" stroke="#c8dcdc" stroke-width="0.5"/><rect x="51.6" y="9.8" width="7.6" height="4.2" fill="none" stroke="#a9c9ca" stroke-width="0.55"/><path d="M52.800000000000004 11.0 h2 v1.8 h-2z M55.800000000000004 11.0 h2.2 M55.800000000000004 12.8 h2.2" fill="none" stroke="#c8dcdc" stroke-width="0.5"/><rect x="41.6" y="15.3" width="7.6" height="4.2" fill="none" stroke="#a9c9ca" stroke-width="0.55"/><path d="M42.800000000000004 16.5 h2 v1.8 h-2z M45.800000000000004 16.5 h2.2 M45.800000000000004 18.3 h2.2" fill="none" stroke="#c8dcdc" stroke-width="0.5"/><rect x="51.6" y="15.3" width="7.6" height="4.2" fill="none" stroke="#a9c9ca" stroke-width="0.55"/><path d="M52.800000000000004 16.5 h2 v1.8 h-2z M55.800000000000004 16.5 h2.2 M55.800000000000004 18.3 h2.2" fill="none" stroke="#c8dcdc" stroke-width="0.5"/><rect x="41.6" y="20.8" width="7.6" height="4.2" fill="none" stroke="#a9c9ca" stroke-width="0.55"/><path d="M42.800000000000004 22.0 h2 v1.8 h-2z M45.800000000000004 22.0 h2.2 M45.800000000000004 23.8 h2.2" fill="none" stroke="#c8dcdc" stroke-width="0.5"/><rect x="51.6" y="20.8" width="7.6" height="4.2" fill="none" stroke="#a9c9ca" stroke-width="0.55"/><path d="M52.800000000000004 22.0 h2 v1.8 h-2z M55.800000000000004 22.0 h2.2 M55.800000000000004 23.8 h2.2" fill="none" stroke="#c8dcdc" stroke-width="0.5"/><rect x="41.6" y="26.3" width="7.6" height="4.2" fill="none" stroke="#a9c9ca" stroke-width="0.55"/><path d="M42.800000000000004 27.5 h2 v1.8 h-2z M45.800000000000004 27.5 h2.2 M45.800000000000004 29.3 h2.2" fill="none" stroke="#c8dcdc" stroke-width="0.5"/><rect x="51.6" y="26.3" width="7.6" height="4.2" fill="none" stroke="#a9c9ca" stroke-width="0.55"/><path d="M52.800000000000004 27.5 h2 v1.8 h-2z M55.800000000000004 27.5 h2.2 M55.800000000000004 29.3 h2.2" fill="none" stroke="#c8dcdc" stroke-width="0.5"/><rect x="41.6" y="31.6" width="7.6" height="4.2" fill="none" stroke="#a9c9ca" stroke-width="0.55"/><path d="M42.800000000000004 32.800000000000004 h2 v1.8 h-2z M45.800000000000004 32.800000000000004 h2.2 M45.800000000000004 34.6 h2.2" fill="none" stroke="#c8dcdc" stroke-width="0.5"/><rect x="51.6" y="31.6" width="7.6" height="4.2" fill="none" stroke="#a9c9ca" stroke-width="0.55"/><path d="M52.800000000000004 32.800000000000004 h2 v1.8 h-2z M55.800000000000004 32.800000000000004 h2.2 M55.800000000000004 34.6 h2.2" fill="none" stroke="#c8dcdc" stroke-width="0.5"/></g>
<path d="M58 18 a5 6 0 0 1 0 10" stroke="#7a6a50" stroke-width="0.8" fill="none"/>
<rect x="40.5" y="35.5" width="30" height="1" fill="#8fb3b8"/>
<!-- small resistor column -->
<rect x="66" y="0" width="8" height="40" fill="#164e5e"/>
<rect x="66.4" y="1.6" width="11.6" height="6" fill="#3e5058" stroke="#9ab8bc" stroke-width="0.6"/>
<g fill="#e6dcc4"><rect x="67.6" y="3" width="2" height="3.2"/><rect x="72.4" y="3" width="2" height="3.2"/></g>
<circle cx="76.3" cy="4.5" r="1" fill="#e0b860"/>
<g><rect x="66.8" y="9.5" width="6" height="3.4" fill="none" stroke="#b8cfd0" stroke-width="0.5"/><path d="M67.6 10.1 l4.4 2.2 M67.6 12.3 l4.4 -2.2" stroke="#d0dede" stroke-width="0.5"/><rect x="66.8" y="13.8" width="6" height="3.4" fill="none" stroke="#b8cfd0" stroke-width="0.5"/><path d="M67.6 14.4 l4.4 2.2 M67.6 16.6 l4.4 -2.2" stroke="#d0dede" stroke-width="0.5"/><rect x="66.8" y="18.1" width="6" height="3.4" fill="none" stroke="#b8cfd0" stroke-width="0.5"/><path d="M67.6 18.700000000000003 l4.4 2.2 M67.6 20.900000000000002 l4.4 -2.2" stroke="#d0dede" stroke-width="0.5"/><rect x="66.8" y="22.4" width="6" height="3.4" fill="none" stroke="#b8cfd0" stroke-width="0.5"/><path d="M67.6 23.0 l4.4 2.2 M67.6 25.2 l4.4 -2.2" stroke="#d0dede" stroke-width="0.5"/><rect x="66.8" y="26.7" width="6" height="3.4" fill="none" stroke="#b8cfd0" stroke-width="0.5"/><path d="M67.6 27.3 l4.4 2.2 M67.6 29.5 l4.4 -2.2" stroke="#d0dede" stroke-width="0.5"/><rect x="66.8" y="31.0" width="6" height="3.4" fill="none" stroke="#b8cfd0" stroke-width="0.5"/><path d="M67.6 31.6 l4.4 2.2 M67.6 33.8 l4.4 -2.2" stroke="#d0dede" stroke-width="0.5"/><rect x="66.8" y="35.3" width="6" height="3.4" fill="none" stroke="#b8cfd0" stroke-width="0.5"/><path d="M67.6 35.9 l4.4 2.2 M67.6 38.099999999999994 l4.4 -2.2" stroke="#d0dede" stroke-width="0.5"/></g>
<rect x="73.9" y="8" width="1" height="32" fill="#8fb3b8"/>
<path d="M74 8 L84 0" stroke="#9ab8bc" stroke-width="1" fill="none"/>
<!-- IC -->
<path d="M75 38 H97 V44 L101 50 H74Z" fill="#103745"/>
<rect x="76" y="9" width="20" height="32" fill="#153f4d"/>
<g fill="#e6dcc4">
<rect x="78.6" y="13.3" width="1.6" height="7"/><rect x="83" y="13.3" width="1.6" height="7"/><rect x="87.5" y="13.3" width="1.6" height="7"/><rect x="92" y="13.3" width="1.6" height="7"/>
<rect x="78.6" y="33.5" width="1.6" height="7"/><rect x="83" y="33.5" width="1.6" height="7"/><rect x="87.5" y="33.5" width="1.6" height="7"/><rect x="92" y="33.5" width="1.6" height="7"/>
</g>
<rect x="77.6" y="21" width="17" height="12.4" fill="#163221"/>
<!-- top resistor row -->
<rect x="82" y="0" width="42" height="10" fill="#22444f"/>
<g fill="#d8ccaa">
<rect x="84.2" y="0.3" width="5" height="8.8"/><rect x="92" y="0.3" width="5" height="8.8"/><rect x="100.1" y="0.3" width="5.2" height="8.8"/><rect x="107.9" y="0.3" width="5.2" height="8.8"/><rect x="116.1" y="0.3" width="5.2" height="8.8"/>
</g>
<g fill="#5a5040"><rect x="85" y="3.3" width="3.4" height="2.8"/><rect x="92.8" y="3.3" width="3.4" height="2.8"/><rect x="100.9" y="3.3" width="3.6" height="2.8"/><rect x="108.7" y="3.3" width="3.6" height="2.8"/><rect x="116.9" y="3.3" width="3.6" height="2.8"/></g>
<rect x="122" y="0" width="8.6" height="14" fill="#2b7381"/>
<!-- right resistor columns -->
<rect x="130" y="0" width="14" height="31" fill="#1d414d"/>
<g fill="#d8ccaa">
<rect x="131.3" y="0.5" width="5" height="9"/><rect x="138.3" y="0.5" width="5" height="9"/>
<rect x="131.3" y="11.5" width="5" height="9"/><rect x="138.3" y="11.5" width="5" height="9"/>
</g>
<g fill="#4a4436"><rect x="132" y="3.5" width="3.6" height="2.8"/><rect x="139" y="3.5" width="3.6" height="2.8"/><rect x="132" y="14.5" width="3.6" height="2.8"/><rect x="139" y="14.5" width="3.6" height="2.8"/></g>
<circle cx="133.3" cy="23" r="1.3" fill="#c9a050" stroke="#e8c878" stroke-width="0.5"/>
<!-- mid horiz components -->
<rect x="97" y="11" width="25" height="24" fill="#226272"/>
<g fill="#d8ccaa" stroke="#264149" stroke-width="0.6">
<rect x="100.1" y="13.6" width="8.6" height="4.5" rx="0.6"/>
<rect x="100.1" y="21.8" width="8.6" height="4.5" rx="0.6"/>
<rect x="100.1" y="29" width="8.6" height="4.5" rx="0.6"/>
</g>
<rect x="111.2" y="13.6" width="8.6" height="4.5" rx="2.2" fill="#e2d4b0" stroke="#2a2a22" stroke-width="0.8"/>
<g fill="#e0b860"><circle cx="99.3" cy="11.1" r="1"/><circle cx="110.4" cy="24.2" r="1"/></g>
<circle cx="117.7" cy="29.2" r="1.1" fill="#e09a50"/>
<rect x="132.5" y="35" width="11.2" height="18" fill="#124351" stroke="#8fb3b8" stroke-width="0.5"/>
<rect x="134.2" y="37.5" width="7.5" height="12.5" fill="#d8d8d0"/>
<rect x="138.8" y="40" width="2.8" height="8" fill="#6a6058"/>
<!-- traces -->
<g stroke="#3f8690" stroke-width="0.7" fill="none">
<path d="M68.6 36.3 L53.1 52.7 V71 Q53.1 72.6 54.7 72.6 H141.4 L118.3 50.3 H95.8"/><path d="M73.1 37.7 L56.2 55.5 V69.5"/>
<path d="M0 75.2 H143.5"/>
<path d="M3 44 Q1.5 46 1.5 50 V77"/>
<path d="M123 30 V40 L143 60"/>
</g>
<g stroke="#0f2e3a" stroke-width="1.6" fill="none"><path d="M127.5 28 V42 L143 57.5"/><path d="M131 28 V40 L143 52"/></g>
<g fill="#d8e4e4"><rect x="95.5" y="76.2" width="6" height="2"/><rect x="13.5" y="40.6" width="5" height="1.8"/></g>
<rect x="20" y="41.6" width="25" height="1" fill="#8fb3b8"/>
<circle cx="45.9" cy="42.1" r="1.1" fill="#d08a60"/>
<circle cx="120.7" cy="42.8" r="1.1" fill="#d08a60"/>
<circle cx="103.6" cy="48.8" r="1.1" fill="#d08a60"/>
<circle cx="98.8" cy="40.5" r="0.9" fill="#e0b860"/>
<g fill="#e0b860"><circle cx="88.7" cy="45" r="1"/></g>
<g fill="#d08a60"><circle cx="99.6" cy="40.4" r="0.9"/><circle cx="103.3" cy="48.6" r="0.9"/></g>
<!-- pins row -->
<g fill="#e2d6c0">
<rect x="70.8" y="50.5" width="1.9" height="8.2"/><rect x="75.3" y="50.5" width="1.9" height="8.2"/><rect x="79.8" y="50.5" width="1.9" height="8.2"/><rect x="84.3" y="50.5" width="1.9" height="8.2"/><rect x="88.9" y="50.5" width="1.9" height="8.2"/><rect x="92.9" y="50.5" width="1.9" height="8.2"/>
</g>
<path d="M70.5 44 h4 l-2 3.5z" fill="none" stroke="#a8c4c8" stroke-width="0.6"/>
<!-- SMD white -->
<rect x="56.8" y="57.5" width="11.5" height="16" fill="none" stroke="#8fb3b8" stroke-width="0.6"/>
<rect x="58.4" y="60.6" width="9" height="11" fill="#e2e2e0"/>
<rect x="58.4" y="58.8" width="9" height="2" fill="#43735e"/>
<rect x="97.3" y="57" width="10.2" height="16" fill="none" stroke="#8fb3b8" stroke-width="0.6"/>
<rect x="98.4" y="60.6" width="8.2" height="11" fill="#e2e2e0"/>
<rect x="98.4" y="58.8" width="8.2" height="2" fill="#43735e"/>
<!-- big pad -->
<g fill="#ebe4c4" stroke="#9a8050" stroke-width="0.45">
<circle cx="16.4" cy="50.8" r="3.7"/><circle cx="25.2" cy="54.5" r="3.7"/><circle cx="28.9" cy="63.3" r="3.7"/><circle cx="25.2" cy="72.1" r="3.7"/><circle cx="16.4" cy="75.8" r="3.7"/><circle cx="7.6" cy="72.1" r="3.7"/><circle cx="3.9" cy="63.3" r="3.7"/><circle cx="7.6" cy="54.5" r="3.7"/>
</g>
<circle cx="16.4" cy="63.3" r="8.6" fill="#e2e2de" stroke="#9a8050" stroke-width="0.45"/>
<circle cx="42.6" cy="63.5" r="5" fill="#123f4d"/>
<circle cx="42.6" cy="63.5" r="3.4" fill="#8a4a28"/>
<circle cx="42.6" cy="63.5" r="1.5" fill="#e09050"/>
<g fill="none" stroke="#3f8a92" stroke-width="0.5">
<circle cx="113" cy="60" r="1.5"/><circle cx="120" cy="61" r="1.5"/><circle cx="113" cy="70" r="1.5"/><circle cx="125" cy="70" r="1.5"/>
<circle cx="84" cy="61" r="1.5"/><circle cx="46" cy="47" r="1.3"/><circle cx="52" cy="47" r="1.3"/><circle cx="7" cy="40" r="1.3"/>
</g>
<rect x="0" y="78.4" width="143.7" height="1" fill="#15414d"/>
</g>
</symbol><symbol id="pcb4" viewBox="0 0 146 82" preserveAspectRatio="none">
<path d="M0 45 L1.6 40 V80 H146 V82 H0Z" fill="#e9e4d6"/>
<g transform="translate(1.6,0) scale(1.0025,1.016)">
<rect x="0" y="0" width="143.7" height="79.4" fill="#0f6478"/>
<!-- left strip -->
<rect x="0" y="0" width="19.8" height="42" fill="#0f5f72"/>
<rect x="14.5" y="0" width="1.2" height="42" fill="#157787"/>
<g fill="none" stroke="#b9d2d2" stroke-width="0.75" stroke-linecap="round">
<path d="M7.5 2.2 L12.5 3.6 L7.5 5 M10 2.9 V4.3"/>
<path d="M10 6.5 V10"/>
<path d="M8.2 11.3 a1.4 1.2 0 1 0 0.01 0 M11.2 11.3 a1.4 1.2 0 1 0 0.01 0"/>
<path d="M12.5 21.5 A2.5 2 0 0 0 7.5 21.5"/>
<path d="M7.5 24 L12.5 27 M7.5 24.5 V27 M12.5 24 V25"/>
<path d="M12.5 30.5 A2.5 2 0 0 0 7.5 30.5"/>
<path d="M7.5 33 L12.5 36 M7.5 33.5 V36 M12.5 33 V34"/>
</g>

<rect x="19.6" y="0" width="1.1" height="40.5" fill="#9ab8bc"/>
<rect x="20.7" y="0" width="17.6" height="39.6" fill="#0c5364"/>
<rect x="20.7" y="39.3" width="18.6" height="1" fill="#9ab8bc"/>
<rect x="38.3" y="0" width="1" height="40.3" fill="#9ab8bc"/>
<path d="M22 9 q5 1 10 5" stroke="#4f8590" stroke-width="0.6" fill="none"/>
<rect x="23.2" y="0" width="15.5" height="4.4" fill="#dedcd2"/>
<g fill="#d9b58c" stroke="#a87a4c" stroke-width="0.5">
<circle cx="34.2" cy="5.4" r="2.2"/><circle cx="34.2" cy="11.8" r="2.3"/><circle cx="34.2" cy="18.6" r="2.3"/><circle cx="34.2" cy="25.4" r="2.3"/><circle cx="34.2" cy="32.1" r="2.3"/>
</g>
<!-- text block R18 R16 -->
<rect x="40" y="0" width="26" height="40" fill="#136e82"/>
<rect x="41.8" y="1.6" width="23.2" height="6" fill="#2a5b64" stroke="#9ab8bc" stroke-width="0.6"/>
<g fill="#e6dcc4"><rect x="44" y="3" width="2" height="3.2"/><rect x="48.6" y="3" width="2" height="3.2"/><rect x="55.8" y="3" width="2" height="3.2"/><rect x="60.2" y="3" width="2" height="3.2"/></g>
<circle cx="53.3" cy="4.5" r="1" fill="#e0b860"/>
<g><rect x="41.6" y="9.8" width="7.6" height="4.2" fill="none" stroke="#a9c9ca" stroke-width="0.55"/><path d="M42.800000000000004 11.0 h2 v1.8 h-2z M45.800000000000004 11.0 h2.2 M45.800000000000004 12.8 h2.2" fill="none" stroke="#c8dcdc" stroke-width="0.5"/><rect x="51.6" y="9.8" width="7.6" height="4.2" fill="none" stroke="#a9c9ca" stroke-width="0.55"/><path d="M52.800000000000004 11.0 h2 v1.8 h-2z M55.800000000000004 11.0 h2.2 M55.800000000000004 12.8 h2.2" fill="none" stroke="#c8dcdc" stroke-width="0.5"/><rect x="41.6" y="15.3" width="7.6" height="4.2" fill="none" stroke="#a9c9ca" stroke-width="0.55"/><path d="M42.800000000000004 16.5 h2 v1.8 h-2z M45.800000000000004 16.5 h2.2 M45.800000000000004 18.3 h2.2" fill="none" stroke="#c8dcdc" stroke-width="0.5"/><rect x="51.6" y="15.3" width="7.6" height="4.2" fill="none" stroke="#a9c9ca" stroke-width="0.55"/><path d="M52.800000000000004 16.5 h2 v1.8 h-2z M55.800000000000004 16.5 h2.2 M55.800000000000004 18.3 h2.2" fill="none" stroke="#c8dcdc" stroke-width="0.5"/><rect x="41.6" y="20.8" width="7.6" height="4.2" fill="none" stroke="#a9c9ca" stroke-width="0.55"/><path d="M42.800000000000004 22.0 h2 v1.8 h-2z M45.800000000000004 22.0 h2.2 M45.800000000000004 23.8 h2.2" fill="none" stroke="#c8dcdc" stroke-width="0.5"/><rect x="51.6" y="20.8" width="7.6" height="4.2" fill="none" stroke="#a9c9ca" stroke-width="0.55"/><path d="M52.800000000000004 22.0 h2 v1.8 h-2z M55.800000000000004 22.0 h2.2 M55.800000000000004 23.8 h2.2" fill="none" stroke="#c8dcdc" stroke-width="0.5"/><rect x="41.6" y="26.3" width="7.6" height="4.2" fill="none" stroke="#a9c9ca" stroke-width="0.55"/><path d="M42.800000000000004 27.5 h2 v1.8 h-2z M45.800000000000004 27.5 h2.2 M45.800000000000004 29.3 h2.2" fill="none" stroke="#c8dcdc" stroke-width="0.5"/><rect x="51.6" y="26.3" width="7.6" height="4.2" fill="none" stroke="#a9c9ca" stroke-width="0.55"/><path d="M52.800000000000004 27.5 h2 v1.8 h-2z M55.800000000000004 27.5 h2.2 M55.800000000000004 29.3 h2.2" fill="none" stroke="#c8dcdc" stroke-width="0.5"/><rect x="41.6" y="31.6" width="7.6" height="4.2" fill="none" stroke="#a9c9ca" stroke-width="0.55"/><path d="M42.800000000000004 32.800000000000004 h2 v1.8 h-2z M45.800000000000004 32.800000000000004 h2.2 M45.800000000000004 34.6 h2.2" fill="none" stroke="#c8dcdc" stroke-width="0.5"/><rect x="51.6" y="31.6" width="7.6" height="4.2" fill="none" stroke="#a9c9ca" stroke-width="0.55"/><path d="M52.800000000000004 32.800000000000004 h2 v1.8 h-2z M55.800000000000004 32.800000000000004 h2.2 M55.800000000000004 34.6 h2.2" fill="none" stroke="#c8dcdc" stroke-width="0.5"/></g>
<path d="M58 18 a5 6 0 0 1 0 10" stroke="#7a6a50" stroke-width="0.8" fill="none"/>
<rect x="40.5" y="35.5" width="30" height="1" fill="#8fb3b8"/>
<!-- small resistor column -->
<rect x="66" y="0" width="8" height="40" fill="#0f596c"/>
<rect x="66.4" y="1.6" width="11.6" height="6" fill="#2a5b64" stroke="#9ab8bc" stroke-width="0.6"/>
<g fill="#e6dcc4"><rect x="67.6" y="3" width="2" height="3.2"/><rect x="72.4" y="3" width="2" height="3.2"/></g>
<circle cx="76.3" cy="4.5" r="1" fill="#e0b860"/>
<g><rect x="66.8" y="9.5" width="6" height="3.4" fill="none" stroke="#b8cfd0" stroke-width="0.5"/><path d="M67.6 10.1 l4.4 2.2 M67.6 12.3 l4.4 -2.2" stroke="#d0dede" stroke-width="0.5"/><rect x="66.8" y="13.8" width="6" height="3.4" fill="none" stroke="#b8cfd0" stroke-width="0.5"/><path d="M67.6 14.4 l4.4 2.2 M67.6 16.6 l4.4 -2.2" stroke="#d0dede" stroke-width="0.5"/><rect x="66.8" y="18.1" width="6" height="3.4" fill="none" stroke="#b8cfd0" stroke-width="0.5"/><path d="M67.6 18.700000000000003 l4.4 2.2 M67.6 20.900000000000002 l4.4 -2.2" stroke="#d0dede" stroke-width="0.5"/><rect x="66.8" y="22.4" width="6" height="3.4" fill="none" stroke="#b8cfd0" stroke-width="0.5"/><path d="M67.6 23.0 l4.4 2.2 M67.6 25.2 l4.4 -2.2" stroke="#d0dede" stroke-width="0.5"/><rect x="66.8" y="26.7" width="6" height="3.4" fill="none" stroke="#b8cfd0" stroke-width="0.5"/><path d="M67.6 27.3 l4.4 2.2 M67.6 29.5 l4.4 -2.2" stroke="#d0dede" stroke-width="0.5"/><rect x="66.8" y="31.0" width="6" height="3.4" fill="none" stroke="#b8cfd0" stroke-width="0.5"/><path d="M67.6 31.6 l4.4 2.2 M67.6 33.8 l4.4 -2.2" stroke="#d0dede" stroke-width="0.5"/><rect x="66.8" y="35.3" width="6" height="3.4" fill="none" stroke="#b8cfd0" stroke-width="0.5"/><path d="M67.6 35.9 l4.4 2.2 M67.6 38.099999999999994 l4.4 -2.2" stroke="#d0dede" stroke-width="0.5"/></g>
<rect x="73.9" y="8" width="1" height="32" fill="#8fb3b8"/>
<path d="M74 8 L84 0" stroke="#9ab8bc" stroke-width="1" fill="none"/>
<!-- IC -->
<path d="M75 38 H97 V44 L101 50 H74Z" fill="#0b3f4e"/>
<rect x="76" y="9" width="20" height="32" fill="#0e4858"/>
<g fill="#e6dcc4">
<rect x="78.6" y="13.3" width="1.6" height="7"/><rect x="83" y="13.3" width="1.6" height="7"/><rect x="87.5" y="13.3" width="1.6" height="7"/><rect x="92" y="13.3" width="1.6" height="7"/>
<rect x="78.6" y="33.5" width="1.6" height="7"/><rect x="83" y="33.5" width="1.6" height="7"/><rect x="87.5" y="33.5" width="1.6" height="7"/><rect x="92" y="33.5" width="1.6" height="7"/>
</g>
<rect x="77.6" y="21" width="17" height="12.4" fill="#0f3926"/>
<!-- top resistor row -->
<rect x="82" y="0" width="42" height="10" fill="#174e5b"/>
<g fill="#d8ccaa">
<rect x="84.2" y="0.3" width="5" height="8.8"/><rect x="92" y="0.3" width="5" height="8.8"/><rect x="100.1" y="0.3" width="5.2" height="8.8"/><rect x="107.9" y="0.3" width="5.2" height="8.8"/><rect x="116.1" y="0.3" width="5.2" height="8.8"/>
</g>
<g fill="#5a5040"><rect x="85" y="3.3" width="3.4" height="2.8"/><rect x="92.8" y="3.3" width="3.4" height="2.8"/><rect x="100.9" y="3.3" width="3.6" height="2.8"/><rect x="108.7" y="3.3" width="3.6" height="2.8"/><rect x="116.9" y="3.3" width="3.6" height="2.8"/></g>
<rect x="122" y="0" width="8.6" height="14" fill="#1d8393"/>
<!-- right resistor columns -->
<rect x="130" y="0" width="14" height="31" fill="#144a58"/>
<g fill="#d8ccaa">
<rect x="131.3" y="0.5" width="5" height="9"/><rect x="138.3" y="0.5" width="5" height="9"/>
<rect x="131.3" y="11.5" width="5" height="9"/><rect x="138.3" y="11.5" width="5" height="9"/>
</g>
<g fill="#4a4436"><rect x="132" y="3.5" width="3.6" height="2.8"/><rect x="139" y="3.5" width="3.6" height="2.8"/><rect x="132" y="14.5" width="3.6" height="2.8"/><rect x="139" y="14.5" width="3.6" height="2.8"/></g>
<circle cx="133.3" cy="23" r="1.3" fill="#c9a050" stroke="#e8c878" stroke-width="0.5"/>
<!-- mid horiz components -->
<rect x="97" y="11" width="25" height="24" fill="#176f82"/>
<g fill="#d8ccaa" stroke="#1a4a53" stroke-width="0.6">
<rect x="100.1" y="13.6" width="8.6" height="4.5" rx="0.6"/>
<rect x="100.1" y="21.8" width="8.6" height="4.5" rx="0.6"/>
<rect x="100.1" y="29" width="8.6" height="4.5" rx="0.6"/>
</g>
<rect x="111.2" y="13.6" width="8.6" height="4.5" rx="2.2" fill="#e2d4b0" stroke="#2a2a22" stroke-width="0.8"/>
<g fill="#e0b860"><circle cx="99.3" cy="11.1" r="1"/><circle cx="110.4" cy="24.2" r="1"/></g>
<circle cx="117.7" cy="29.2" r="1.1" fill="#e09a50"/>
<rect x="132.5" y="35" width="11.2" height="18" fill="#0c4d5d" stroke="#8fb3b8" stroke-width="0.5"/>
<rect x="134.2" y="37.5" width="7.5" height="12.5" fill="#d8d8d0"/>
<rect x="138.8" y="40" width="2.8" height="8" fill="#6a6058"/>
<!-- traces -->
<g stroke="#3f8690" stroke-width="0.7" fill="none">
<path d="M68.6 36.3 L53.1 52.7 V71 Q53.1 72.6 54.7 72.6 H141.4 L118.3 50.3 H95.8"/><path d="M73.1 37.7 L56.2 55.5 V69.5"/>
<path d="M0 75.2 H143.5"/>
<path d="M3 44 Q1.5 46 1.5 50 V77"/>
<path d="M123 30 V40 L143 60"/>
</g>
<g stroke="#0a3442" stroke-width="1.6" fill="none"><path d="M127.5 28 V42 L143 57.5"/><path d="M131 28 V40 L143 52"/></g>
<g fill="#d8e4e4"><rect x="95.5" y="76.2" width="6" height="2"/><rect x="13.5" y="40.6" width="5" height="1.8"/></g>
<rect x="20" y="41.6" width="25" height="1" fill="#8fb3b8"/>
<circle cx="45.9" cy="42.1" r="1.1" fill="#d08a60"/>
<circle cx="120.7" cy="42.8" r="1.1" fill="#d08a60"/>
<circle cx="103.6" cy="48.8" r="1.1" fill="#d08a60"/>
<circle cx="98.8" cy="40.5" r="0.9" fill="#e0b860"/>
<g fill="#e0b860"><circle cx="88.7" cy="45" r="1"/></g>
<g fill="#d08a60"><circle cx="99.6" cy="40.4" r="0.9"/><circle cx="103.3" cy="48.6" r="0.9"/></g>
<!-- pins row -->
<g fill="#e2d6c0">
<rect x="70.8" y="50.5" width="1.9" height="8.2"/><rect x="75.3" y="50.5" width="1.9" height="8.2"/><rect x="79.8" y="50.5" width="1.9" height="8.2"/><rect x="84.3" y="50.5" width="1.9" height="8.2"/><rect x="88.9" y="50.5" width="1.9" height="8.2"/><rect x="92.9" y="50.5" width="1.9" height="8.2"/>
</g>
<path d="M70.5 44 h4 l-2 3.5z" fill="none" stroke="#a8c4c8" stroke-width="0.6"/>
<!-- SMD white -->
<rect x="56.8" y="57.5" width="11.5" height="16" fill="none" stroke="#8fb3b8" stroke-width="0.6"/>
<rect x="58.4" y="60.6" width="9" height="11" fill="#e2e2e0"/>
<rect x="58.4" y="58.8" width="9" height="2" fill="#2e836c"/>
<rect x="97.3" y="57" width="10.2" height="16" fill="none" stroke="#8fb3b8" stroke-width="0.6"/>
<rect x="98.4" y="60.6" width="8.2" height="11" fill="#e2e2e0"/>
<rect x="98.4" y="58.8" width="8.2" height="2" fill="#2e836c"/>
<!-- big pad -->
<g fill="#ebe4c4" stroke="#9a8050" stroke-width="0.45">
<circle cx="16.4" cy="50.8" r="3.7"/><circle cx="25.2" cy="54.5" r="3.7"/><circle cx="28.9" cy="63.3" r="3.7"/><circle cx="25.2" cy="72.1" r="3.7"/><circle cx="16.4" cy="75.8" r="3.7"/><circle cx="7.6" cy="72.1" r="3.7"/><circle cx="3.9" cy="63.3" r="3.7"/><circle cx="7.6" cy="54.5" r="3.7"/>
</g>
<circle cx="16.4" cy="63.3" r="8.6" fill="#e2e2de" stroke="#9a8050" stroke-width="0.45"/>
<circle cx="42.6" cy="63.5" r="5" fill="#0c4858"/>
<circle cx="42.6" cy="63.5" r="3.4" fill="#8a4a28"/>
<circle cx="42.6" cy="63.5" r="1.5" fill="#e09050"/>
<g fill="none" stroke="#3f8a92" stroke-width="0.5">
<circle cx="113" cy="60" r="1.5"/><circle cx="120" cy="61" r="1.5"/><circle cx="113" cy="70" r="1.5"/><circle cx="125" cy="70" r="1.5"/>
<circle cx="84" cy="61" r="1.5"/><circle cx="46" cy="47" r="1.3"/><circle cx="52" cy="47" r="1.3"/><circle cx="7" cy="40" r="1.3"/>
</g>
<rect x="0" y="78.4" width="143.7" height="1" fill="#0e4a58"/>
</g>
</symbol><symbol id="pcb5" viewBox="0 0 146 82" preserveAspectRatio="none">
<path d="M0 45 L1.6 40 V80 H146 V82 H0Z" fill="#e9e4d6"/>
<g transform="translate(1.6,0) scale(1.0025,1.016)">
<rect x="0" y="0" width="143.7" height="79.4" fill="#0a4b5f"/>
<!-- left strip -->
<rect x="0" y="0" width="19.8" height="42" fill="#0a475a"/>
<rect x="14.5" y="0" width="1.2" height="42" fill="#0e596b"/>
<g fill="none" stroke="#b9d2d2" stroke-width="0.75" stroke-linecap="round">
<path d="M7.5 2.2 L12.5 3.6 L7.5 5 M10 2.9 V4.3"/>
<path d="M10 6.5 V10"/>
<path d="M8.2 11.3 a1.4 1.2 0 1 0 0.01 0 M11.2 11.3 a1.4 1.2 0 1 0 0.01 0"/>
<path d="M12.5 21.5 A2.5 2 0 0 0 7.5 21.5"/>
<path d="M7.5 24 L12.5 27 M7.5 24.5 V27 M12.5 24 V25"/>
<path d="M12.5 30.5 A2.5 2 0 0 0 7.5 30.5"/>
<path d="M7.5 33 L12.5 36 M7.5 33.5 V36 M12.5 33 V34"/>
</g>

<rect x="19.6" y="0" width="1.1" height="40.5" fill="#9ab8bc"/>
<rect x="20.7" y="0" width="17.6" height="39.6" fill="#083e4f"/>
<rect x="20.7" y="39.3" width="18.6" height="1" fill="#9ab8bc"/>
<rect x="38.3" y="0" width="1" height="40.3" fill="#9ab8bc"/>
<path d="M22 9 q5 1 10 5" stroke="#4f8590" stroke-width="0.6" fill="none"/>
<rect x="23.2" y="0" width="15.5" height="4.4" fill="#dedcd2"/>
<g fill="#d9b58c" stroke="#a87a4c" stroke-width="0.5">
<circle cx="34.2" cy="5.4" r="2.2"/><circle cx="34.2" cy="11.8" r="2.3"/><circle cx="34.2" cy="18.6" r="2.3"/><circle cx="34.2" cy="25.4" r="2.3"/><circle cx="34.2" cy="32.1" r="2.3"/>
</g>
<!-- text block R18 R16 -->
<rect x="40" y="0" width="26" height="40" fill="#0d5267"/>
<rect x="41.8" y="1.6" width="23.2" height="6" fill="#1c454f" stroke="#9ab8bc" stroke-width="0.6"/>
<g fill="#e6dcc4"><rect x="44" y="3" width="2" height="3.2"/><rect x="48.6" y="3" width="2" height="3.2"/><rect x="55.8" y="3" width="2" height="3.2"/><rect x="60.2" y="3" width="2" height="3.2"/></g>
<circle cx="53.3" cy="4.5" r="1" fill="#e0b860"/>
<g><rect x="41.6" y="9.8" width="7.6" height="4.2" fill="none" stroke="#a9c9ca" stroke-width="0.55"/><path d="M42.800000000000004 11.0 h2 v1.8 h-2z M45.800000000000004 11.0 h2.2 M45.800000000000004 12.8 h2.2" fill="none" stroke="#c8dcdc" stroke-width="0.5"/><rect x="51.6" y="9.8" width="7.6" height="4.2" fill="none" stroke="#a9c9ca" stroke-width="0.55"/><path d="M52.800000000000004 11.0 h2 v1.8 h-2z M55.800000000000004 11.0 h2.2 M55.800000000000004 12.8 h2.2" fill="none" stroke="#c8dcdc" stroke-width="0.5"/><rect x="41.6" y="15.3" width="7.6" height="4.2" fill="none" stroke="#a9c9ca" stroke-width="0.55"/><path d="M42.800000000000004 16.5 h2 v1.8 h-2z M45.800000000000004 16.5 h2.2 M45.800000000000004 18.3 h2.2" fill="none" stroke="#c8dcdc" stroke-width="0.5"/><rect x="51.6" y="15.3" width="7.6" height="4.2" fill="none" stroke="#a9c9ca" stroke-width="0.55"/><path d="M52.800000000000004 16.5 h2 v1.8 h-2z M55.800000000000004 16.5 h2.2 M55.800000000000004 18.3 h2.2" fill="none" stroke="#c8dcdc" stroke-width="0.5"/><rect x="41.6" y="20.8" width="7.6" height="4.2" fill="none" stroke="#a9c9ca" stroke-width="0.55"/><path d="M42.800000000000004 22.0 h2 v1.8 h-2z M45.800000000000004 22.0 h2.2 M45.800000000000004 23.8 h2.2" fill="none" stroke="#c8dcdc" stroke-width="0.5"/><rect x="51.6" y="20.8" width="7.6" height="4.2" fill="none" stroke="#a9c9ca" stroke-width="0.55"/><path d="M52.800000000000004 22.0 h2 v1.8 h-2z M55.800000000000004 22.0 h2.2 M55.800000000000004 23.8 h2.2" fill="none" stroke="#c8dcdc" stroke-width="0.5"/><rect x="41.6" y="26.3" width="7.6" height="4.2" fill="none" stroke="#a9c9ca" stroke-width="0.55"/><path d="M42.800000000000004 27.5 h2 v1.8 h-2z M45.800000000000004 27.5 h2.2 M45.800000000000004 29.3 h2.2" fill="none" stroke="#c8dcdc" stroke-width="0.5"/><rect x="51.6" y="26.3" width="7.6" height="4.2" fill="none" stroke="#a9c9ca" stroke-width="0.55"/><path d="M52.800000000000004 27.5 h2 v1.8 h-2z M55.800000000000004 27.5 h2.2 M55.800000000000004 29.3 h2.2" fill="none" stroke="#c8dcdc" stroke-width="0.5"/><rect x="41.6" y="31.6" width="7.6" height="4.2" fill="none" stroke="#a9c9ca" stroke-width="0.55"/><path d="M42.800000000000004 32.800000000000004 h2 v1.8 h-2z M45.800000000000004 32.800000000000004 h2.2 M45.800000000000004 34.6 h2.2" fill="none" stroke="#c8dcdc" stroke-width="0.5"/><rect x="51.6" y="31.6" width="7.6" height="4.2" fill="none" stroke="#a9c9ca" stroke-width="0.55"/><path d="M52.800000000000004 32.800000000000004 h2 v1.8 h-2z M55.800000000000004 32.800000000000004 h2.2 M55.800000000000004 34.6 h2.2" fill="none" stroke="#c8dcdc" stroke-width="0.5"/></g>
<path d="M58 18 a5 6 0 0 1 0 10" stroke="#7a6a50" stroke-width="0.8" fill="none"/>
<rect x="40.5" y="35.5" width="30" height="1" fill="#8fb3b8"/>
<!-- small resistor column -->
<rect x="66" y="0" width="8" height="40" fill="#0a4355"/>
<rect x="66.4" y="1.6" width="11.6" height="6" fill="#1c454f" stroke="#9ab8bc" stroke-width="0.6"/>
<g fill="#e6dcc4"><rect x="67.6" y="3" width="2" height="3.2"/><rect x="72.4" y="3" width="2" height="3.2"/></g>
<circle cx="76.3" cy="4.5" r="1" fill="#e0b860"/>
<g><rect x="66.8" y="9.5" width="6" height="3.4" fill="none" stroke="#b8cfd0" stroke-width="0.5"/><path d="M67.6 10.1 l4.4 2.2 M67.6 12.3 l4.4 -2.2" stroke="#d0dede" stroke-width="0.5"/><rect x="66.8" y="13.8" width="6" height="3.4" fill="none" stroke="#b8cfd0" stroke-width="0.5"/><path d="M67.6 14.4 l4.4 2.2 M67.6 16.6 l4.4 -2.2" stroke="#d0dede" stroke-width="0.5"/><rect x="66.8" y="18.1" width="6" height="3.4" fill="none" stroke="#b8cfd0" stroke-width="0.5"/><path d="M67.6 18.700000000000003 l4.4 2.2 M67.6 20.900000000000002 l4.4 -2.2" stroke="#d0dede" stroke-width="0.5"/><rect x="66.8" y="22.4" width="6" height="3.4" fill="none" stroke="#b8cfd0" stroke-width="0.5"/><path d="M67.6 23.0 l4.4 2.2 M67.6 25.2 l4.4 -2.2" stroke="#d0dede" stroke-width="0.5"/><rect x="66.8" y="26.7" width="6" height="3.4" fill="none" stroke="#b8cfd0" stroke-width="0.5"/><path d="M67.6 27.3 l4.4 2.2 M67.6 29.5 l4.4 -2.2" stroke="#d0dede" stroke-width="0.5"/><rect x="66.8" y="31.0" width="6" height="3.4" fill="none" stroke="#b8cfd0" stroke-width="0.5"/><path d="M67.6 31.6 l4.4 2.2 M67.6 33.8 l4.4 -2.2" stroke="#d0dede" stroke-width="0.5"/><rect x="66.8" y="35.3" width="6" height="3.4" fill="none" stroke="#b8cfd0" stroke-width="0.5"/><path d="M67.6 35.9 l4.4 2.2 M67.6 38.099999999999994 l4.4 -2.2" stroke="#d0dede" stroke-width="0.5"/></g>
<rect x="73.9" y="8" width="1" height="32" fill="#8fb3b8"/>
<path d="M74 8 L84 0" stroke="#9ab8bc" stroke-width="1" fill="none"/>
<!-- IC -->
<path d="M75 38 H97 V44 L101 50 H74Z" fill="#072f3e"/>
<rect x="76" y="9" width="20" height="32" fill="#093646"/>
<g fill="#e6dcc4">
<rect x="78.6" y="13.3" width="1.6" height="7"/><rect x="83" y="13.3" width="1.6" height="7"/><rect x="87.5" y="13.3" width="1.6" height="7"/><rect x="92" y="13.3" width="1.6" height="7"/>
<rect x="78.6" y="33.5" width="1.6" height="7"/><rect x="83" y="33.5" width="1.6" height="7"/><rect x="87.5" y="33.5" width="1.6" height="7"/><rect x="92" y="33.5" width="1.6" height="7"/>
</g>
<rect x="77.6" y="21" width="17" height="12.4" fill="#0a2b1e"/>
<!-- top resistor row -->
<rect x="82" y="0" width="42" height="10" fill="#0f3a48"/>
<g fill="#d8ccaa">
<rect x="84.2" y="0.3" width="5" height="8.8"/><rect x="92" y="0.3" width="5" height="8.8"/><rect x="100.1" y="0.3" width="5.2" height="8.8"/><rect x="107.9" y="0.3" width="5.2" height="8.8"/><rect x="116.1" y="0.3" width="5.2" height="8.8"/>
</g>
<g fill="#5a5040"><rect x="85" y="3.3" width="3.4" height="2.8"/><rect x="92.8" y="3.3" width="3.4" height="2.8"/><rect x="100.9" y="3.3" width="3.6" height="2.8"/><rect x="108.7" y="3.3" width="3.6" height="2.8"/><rect x="116.9" y="3.3" width="3.6" height="2.8"/></g>
<rect x="122" y="0" width="8.6" height="14" fill="#136274"/>
<!-- right resistor columns -->
<rect x="130" y="0" width="14" height="31" fill="#0d3846"/>
<g fill="#d8ccaa">
<rect x="131.3" y="0.5" width="5" height="9"/><rect x="138.3" y="0.5" width="5" height="9"/>
<rect x="131.3" y="11.5" width="5" height="9"/><rect x="138.3" y="11.5" width="5" height="9"/>
</g>
<g fill="#4a4436"><rect x="132" y="3.5" width="3.6" height="2.8"/><rect x="139" y="3.5" width="3.6" height="2.8"/><rect x="132" y="14.5" width="3.6" height="2.8"/><rect x="139" y="14.5" width="3.6" height="2.8"/></g>
<circle cx="133.3" cy="23" r="1.3" fill="#c9a050" stroke="#e8c878" stroke-width="0.5"/>
<!-- mid horiz components -->
<rect x="97" y="11" width="25" height="24" fill="#0f5367"/>
<g fill="#d8ccaa" stroke="#113842" stroke-width="0.6">
<rect x="100.1" y="13.6" width="8.6" height="4.5" rx="0.6"/>
<rect x="100.1" y="21.8" width="8.6" height="4.5" rx="0.6"/>
<rect x="100.1" y="29" width="8.6" height="4.5" rx="0.6"/>
</g>
<rect x="111.2" y="13.6" width="8.6" height="4.5" rx="2.2" fill="#e2d4b0" stroke="#2a2a22" stroke-width="0.8"/>
<g fill="#e0b860"><circle cx="99.3" cy="11.1" r="1"/><circle cx="110.4" cy="24.2" r="1"/></g>
<circle cx="117.7" cy="29.2" r="1.1" fill="#e09a50"/>
<rect x="132.5" y="35" width="11.2" height="18" fill="#08394a" stroke="#8fb3b8" stroke-width="0.5"/>
<rect x="134.2" y="37.5" width="7.5" height="12.5" fill="#d8d8d0"/>
<rect x="138.8" y="40" width="2.8" height="8" fill="#6a6058"/>
<!-- traces -->
<g stroke="#3f8690" stroke-width="0.7" fill="none">
<path d="M68.6 36.3 L53.1 52.7 V71 Q53.1 72.6 54.7 72.6 H141.4 L118.3 50.3 H95.8"/><path d="M73.1 37.7 L56.2 55.5 V69.5"/>
<path d="M0 75.2 H143.5"/>
<path d="M3 44 Q1.5 46 1.5 50 V77"/>
<path d="M123 30 V40 L143 60"/>
</g>
<g stroke="#072734" stroke-width="1.6" fill="none"><path d="M127.5 28 V42 L143 57.5"/><path d="M131 28 V40 L143 52"/></g>
<g fill="#d8e4e4"><rect x="95.5" y="76.2" width="6" height="2"/><rect x="13.5" y="40.6" width="5" height="1.8"/></g>
<rect x="20" y="41.6" width="25" height="1" fill="#8fb3b8"/>
<circle cx="45.9" cy="42.1" r="1.1" fill="#d08a60"/>
<circle cx="120.7" cy="42.8" r="1.1" fill="#d08a60"/>
<circle cx="103.6" cy="48.8" r="1.1" fill="#d08a60"/>
<circle cx="98.8" cy="40.5" r="0.9" fill="#e0b860"/>
<g fill="#e0b860"><circle cx="88.7" cy="45" r="1"/></g>
<g fill="#d08a60"><circle cx="99.6" cy="40.4" r="0.9"/><circle cx="103.3" cy="48.6" r="0.9"/></g>
<!-- pins row -->
<g fill="#e2d6c0">
<rect x="70.8" y="50.5" width="1.9" height="8.2"/><rect x="75.3" y="50.5" width="1.9" height="8.2"/><rect x="79.8" y="50.5" width="1.9" height="8.2"/><rect x="84.3" y="50.5" width="1.9" height="8.2"/><rect x="88.9" y="50.5" width="1.9" height="8.2"/><rect x="92.9" y="50.5" width="1.9" height="8.2"/>
</g>
<path d="M70.5 44 h4 l-2 3.5z" fill="none" stroke="#a8c4c8" stroke-width="0.6"/>
<!-- SMD white -->
<rect x="56.8" y="57.5" width="11.5" height="16" fill="none" stroke="#8fb3b8" stroke-width="0.6"/>
<rect x="58.4" y="60.6" width="9" height="11" fill="#e2e2e0"/>
<rect x="58.4" y="58.8" width="9" height="2" fill="#1f6255"/>
<rect x="97.3" y="57" width="10.2" height="16" fill="none" stroke="#8fb3b8" stroke-width="0.6"/>
<rect x="98.4" y="60.6" width="8.2" height="11" fill="#e2e2e0"/>
<rect x="98.4" y="58.8" width="8.2" height="2" fill="#1f6255"/>
<!-- big pad -->
<g fill="#ebe4c4" stroke="#9a8050" stroke-width="0.45">
<circle cx="16.4" cy="50.8" r="3.7"/><circle cx="25.2" cy="54.5" r="3.7"/><circle cx="28.9" cy="63.3" r="3.7"/><circle cx="25.2" cy="72.1" r="3.7"/><circle cx="16.4" cy="75.8" r="3.7"/><circle cx="7.6" cy="72.1" r="3.7"/><circle cx="3.9" cy="63.3" r="3.7"/><circle cx="7.6" cy="54.5" r="3.7"/>
</g>
<circle cx="16.4" cy="63.3" r="8.6" fill="#e2e2de" stroke="#9a8050" stroke-width="0.45"/>
<circle cx="42.6" cy="63.5" r="5" fill="#083646"/>
<circle cx="42.6" cy="63.5" r="3.4" fill="#8a4a28"/>
<circle cx="42.6" cy="63.5" r="1.5" fill="#e09050"/>
<g fill="none" stroke="#3f8a92" stroke-width="0.5">
<circle cx="113" cy="60" r="1.5"/><circle cx="120" cy="61" r="1.5"/><circle cx="113" cy="70" r="1.5"/><circle cx="125" cy="70" r="1.5"/>
<circle cx="84" cy="61" r="1.5"/><circle cx="46" cy="47" r="1.3"/><circle cx="52" cy="47" r="1.3"/><circle cx="7" cy="40" r="1.3"/>
</g>
<rect x="0" y="78.4" width="143.7" height="1" fill="#093846"/>
</g>
</symbol></defs></svg>
<div class="a" style="left:2.8px;top:6px;font-size:4.4px;line-height:4.4px;color:#0073bb;transform:scaleX(1.0702);-webkit-text-stroke:0.04px currentColor">Amazon Lookout for Vision</div>
<svg class="a" style="left:63.6px;top:5.5px;width:2.6px;height:5.0px;overflow:visible" viewBox="0 0 2.6 5.0"><path d="M0.3 0.3 L2.3000000000000003 2.5 L0.3 4.7" fill="none" stroke="#879596" stroke-width="0.6"/></svg>
<div class="a" style="left:71.0px;top:6px;font-size:4.4px;line-height:4.4px;color:#0073bb;transform:scaleX(1.0569);-webkit-text-stroke:0.04px currentColor">Projects</div>
<svg class="a" style="left:92.2px;top:5.5px;width:2.6px;height:5.0px;overflow:visible" viewBox="0 0 2.6 5.0"><path d="M0.3 0.3 L2.3000000000000003 2.5 L0.3 4.7" fill="none" stroke="#879596" stroke-width="0.6"/></svg>
<div class="a" style="left:99.2px;top:6px;font-size:4.4px;line-height:4.4px;color:#0073bb;transform:scaleX(1.0921);-webkit-text-stroke:0.04px currentColor">quality_inspection_project</div>
<svg class="a" style="left:158.8px;top:5.5px;width:2.6px;height:5.0px;overflow:visible" viewBox="0 0 2.6 5.0"><path d="M0.3 0.3 L2.3000000000000003 2.5 L0.3 4.7" fill="none" stroke="#879596" stroke-width="0.6"/></svg>
<div class="a" style="left:166.4px;top:6px;font-size:4.4px;line-height:4.4px;color:#545b64;transform:scaleX(1.0550);-webkit-text-stroke:0.04px currentColor">Dataset</div>
<div class="a" style="left:2.8px;top:19px;font-size:9.5px;line-height:9.5px;color:#16191f;transform:scaleX(1.0089);-webkit-text-stroke:0.25px currentColor">quality_inspection_project</div>
<div class="a" style="left:115.7px;top:23px;font-size:4.0px;line-height:4.0px;color:#0073bb;font-weight:700;transform:scaleX(0.9821);">Info</div>
<div class="a" style="left:792.3px;top:18.3px;width:37.1px;height:11.1px;border:1px solid #c2cacb;border-radius:1.2px;background:#fff"></div>
<div class="a" style="left:799.0px;top:23px;font-size:4.7px;line-height:4.7px;color:#16191f;font-weight:700;transform:scaleX(0.9631);">Actions</div>
<svg class="a" style="left:819.5px;top:22.7px;width:3.2px;height:2.4px;overflow:visible" viewBox="0 0 3.2 2.4"><path d="M0 2.4 H3.2 L1.6 0Z" fill="#16191f"/></svg>
<div class="a" style="left:831.9px;top:18.9px;width:40.9px;height:10.1px;background:#ec7211;border-radius:1px"></div>
<div class="a" style="left:839.3px;top:23px;font-size:4.7px;line-height:4.7px;color:#fff;font-weight:700;transform:scaleX(1.0008);">Train model</div>
<div class="panel" style="left:3px;top:36px;width:870px;height:57.2px;"><div class="ph" style="height:20.7px;"></div></div>
<svg class="a" style="left:9.1px;top:44.4px;width:3.6px;height:2.8px;overflow:visible" viewBox="0 0 3.6 2.8"><path d="M0 0 H3.6 L1.8 2.8Z" fill="#16191f"/></svg>
<div class="a" style="left:16.1px;top:44px;font-size:5.5px;line-height:5.5px;color:#16191f;font-weight:700;transform:scaleX(1.0488);">How it works: Prepare your datasets</div>
<svg class="a" style="left:6px;top:58px;width:34px;height:28px" viewBox="0 0 533 439">
<path d="M112 160 V95 H403 V160" fill="none" stroke="#5b7cc4" stroke-width="14"/>
<g fill="none" stroke="#5f6670" stroke-width="14" stroke-linejoin="round">
<path d="M92 352 Q72 350 72 330 V195 Q72 178 92 178 H150"/>
<path d="M130 210 H190 L232 250 V360 Q232 380 212 380 H130 Q112 380 112 360 V230 Q112 210 130 210Z"/>
<path d="M125 290 Q172 260 222 290 M125 322 Q172 295 222 322"/>
<path d="M292 352 Q272 350 272 330 V195 Q272 178 292 178 H350"/>
<path d="M330 210 H390 L432 250 V360 Q432 380 412 380 H330 Q312 380 312 360 V230 Q312 210 330 210Z"/>
<path d="M325 290 Q372 260 422 290 M325 322 Q372 295 422 322"/>
</g></svg>
<div class="a" style="left:40.8px;top:64px;font-size:4.7px;line-height:4.7px;color:#16191f;font-weight:700;transform:scaleX(0.9372);">1. Classify images</div>
<div class="a" style="left:40.8px;top:73px;font-size:4.4px;line-height:4.4px;color:#16191f;transform:scaleX(1.0705);-webkit-text-stroke:0.05px currentColor">Classify images as normal or an anomaly. Classify multiple images at a time by first selecting the desired images. If you don't need your model to find anomalous areas, then you don't need to define</div>
<div class="a" style="left:40.8px;top:80px;font-size:4.4px;line-height:4.4px;color:#16191f;transform:scaleX(1.0799);-webkit-text-stroke:0.05px currentColor">any anomaly labels.</div>
<svg class="a" style="left:460px;top:58px;width:34px;height:28px" viewBox="0 0 533 439">
<g fill="#fff" stroke="#5f6670" stroke-width="14" stroke-linejoin="round">
<path d="M80 305 V115 H185 L200 130 V305Z"/>
<path d="M125 340 V150 H230 L250 170 V340Z"/>
<path d="M160 370 V180 H250 L295 225 V370Z"/>
</g>
<path d="M227 262.8 L407 109.8 Q430 95 433 140.2 L253 293.2 L208 312 Z" fill="#fff" stroke="#4f74d0" stroke-width="16" stroke-linejoin="round"/>
<path d="M235 276 L415 123" stroke="#4f74d0" stroke-width="6"/>
</svg>
<div class="a" style="left:495.8px;top:64px;font-size:4.7px;line-height:4.7px;color:#16191f;font-weight:700;transform:scaleX(0.9611);">2. Add anomalous areas</div>
<div class="a" style="left:495.8px;top:73px;font-size:4.4px;line-height:4.4px;color:#16191f;transform:scaleX(1.1108);-webkit-text-stroke:0.05px currentColor">If you want your model to also find anomalous areas, define your anomaly labels, such as a scratch or dent. Then use the tool to draw the anomalous areas and choose</div>
<div class="a" style="left:495.8px;top:80px;font-size:4.4px;line-height:4.4px;color:#16191f;transform:scaleX(1.0630);-webkit-text-stroke:0.05px currentColor">anomaly labels.</div>
<div class="a" style="left:2.6px;top:98.2px;width:870.4px;height:47.6px;background:#eff6ee;border:1px solid #a3cc96"></div>
<svg class="a" style="left:9px;top:104.6px;width:12px;height:12px;overflow:visible" viewBox="0 0 12 12">
<circle cx="5.93" cy="5.93" r="4.8" fill="none" stroke="#1d7a0c" stroke-width="1.25"/>
<path d="M3.3 5.7 L5.2 7.5 L8.4 4.3" fill="none" stroke="#1d7a0c" stroke-width="1.25"/></svg>
<div class="a" style="left:22.8px;top:107px;font-size:4.7px;line-height:4.7px;color:#16191f;font-weight:700;transform:scaleX(0.9656);">You have enough labeled images to train a model.</div>
<div class="a" style="left:23.9px;top:116.69999999999999px;width:1.3px;height:1.3px;border-radius:50%;background:#16191f"></div>
<div class="a" style="left:29.2px;top:116px;font-size:4.7px;line-height:4.7px;color:#16191f;transform:scaleX(1.0091);">You can improve the quality of your model by adding more labeled images.</div>
<div class="a" style="left:23.9px;top:125.3px;width:1.3px;height:1.3px;border-radius:50%;background:#16191f"></div>
<div class="a" style="left:29.2px;top:125px;font-size:4.7px;line-height:4.7px;color:#16191f;transform:scaleX(1.0086);">Unlabeled images aren't used for training.</div>
<div class="a" style="left:23.9px;top:134.0px;width:1.3px;height:1.3px;border-radius:50%;background:#16191f"></div>
<div class="a" style="left:29.2px;top:133px;font-size:4.7px;line-height:4.7px;color:#16191f;transform:scaleX(1.0109);">Click 'Train model' above to start training a model.</div>
<div class="panel" style="left:3px;top:153px;width:212px;height:93px;"><div class="ph" style="height:21.0px;"></div></div>
<div class="a" style="left:9.3px;top:161px;font-size:5.5px;line-height:5.5px;color:#16191f;font-weight:700;transform:scaleX(1.0540);">Filters</div>
<svg class="a" style="left:8.9px;top:180.9px;width:4.8px;height:4.8px;overflow:visible" viewBox="0 0 4.8 4.8"><circle cx="2.4" cy="2.4" r="1.85" fill="#fff" stroke="#0073bb" stroke-width="1.1"/></svg>
<div class="a" style="left:16.4px;top:182px;font-size:4.7px;line-height:4.7px;color:#16191f;transform:scaleX(0.9982);">All images&nbsp;&nbsp;(124)</div>
<svg class="a" style="left:8.9px;top:191.2px;width:4.8px;height:4.8px;overflow:visible" viewBox="0 0 4.8 4.8"><circle cx="2.4" cy="2.4" r="2.0" fill="#fff" stroke="#aab7b8" stroke-width="0.55"/></svg>
<div class="a" style="left:16.4px;top:193px;font-size:4.7px;line-height:4.7px;color:#16191f;transform:scaleX(1.0061);">Labeled&nbsp;&nbsp;(124)</div>
<svg class="a" style="left:8.9px;top:201.1px;width:4.8px;height:4.8px;overflow:visible" viewBox="0 0 4.8 4.8"><circle cx="2.4" cy="2.4" r="2.0" fill="#fff" stroke="#aab7b8" stroke-width="0.55"/></svg>
<div class="a" style="left:16.4px;top:203px;font-size:4.7px;line-height:4.7px;color:#16191f;transform:scaleX(0.9925);">Unlabeled&nbsp;&nbsp;(0)</div>
<div class="a" style="left:8.6px;top:213.0px;width:200px;height:0.6px;background:#eaeded"></div>
<svg class="a" style="left:9.3px;top:220.3px;width:4.4px;height:4.4px;overflow:visible" viewBox="0 0 4.4 4.4"><rect x="0.25" y="0.25" width="3.9000000000000004" height="3.9000000000000004" rx="0.5" fill="#dfe3e3" stroke="#d5dbdb" stroke-width="0.5"/></svg>
<div class="a" style="left:16.2px;top:221px;font-size:4.7px;line-height:4.7px;color:#16191f;transform:scaleX(1.0183);"><span style="color:#aab7b8">Normal</span>&nbsp;&nbsp;(31)</div>
<svg class="a" style="left:9.3px;top:230.9px;width:4.4px;height:4.4px;overflow:visible" viewBox="0 0 4.4 4.4"><rect x="0.25" y="0.25" width="3.9000000000000004" height="3.9000000000000004" rx="0.5" fill="#dfe3e3" stroke="#d5dbdb" stroke-width="0.5"/></svg>
<div class="a" style="left:16.2px;top:232px;font-size:4.7px;line-height:4.7px;color:#16191f;transform:scaleX(1.0220);"><span style="color:#aab7b8">Anomaly</span>&nbsp;&nbsp;(93)</div>
<div class="panel" style="left:3px;top:253.8px;width:212px;height:89.2px;"><div class="ph" style="height:21.2px;"></div></div>
<div class="a" style="left:9.35px;top:261px;font-size:5.5px;line-height:5.5px;color:#16191f;font-weight:700;transform:scaleX(1.0608);">Anomaly labels</div>
<div class="a" style="left:186.2px;top:258.6px;width:22.5px;height:10.2px;border:1px solid #7f8b8c;border-radius:1px;background:#fff"></div>
<div class="a" style="left:188.7px;top:263px;font-size:4.7px;line-height:4.7px;color:#545b64;font-weight:700;transform:scaleX(0.9886);">Manage</div>
<div class="a" style="left:9.0px;top:280.0px;width:200.0px;height:10.6px;border:1px solid #bcc5c6;border-radius:1px;background:#fff"></div>
<svg class="a" style="left:12.0px;top:283.2px;width:4.6px;height:4.6px;overflow:visible" viewBox="0 0 10 10"><circle cx="4.2" cy="4.2" r="3.0" fill="none" stroke="#545b64" stroke-width="2.1"/><path d="M6.5 6.5 L9.4 9.4" stroke="#545b64" stroke-width="2.2"/></svg>
<div class="a" style="left:19.6px;top:284px;font-size:4.7px;line-height:4.7px;color:#687078;font-style:italic;transform:scaleX(0.9904);">Find anomaly labels</div>
<svg class="a" style="left:9.6px;top:296.0px;width:4.4px;height:4.4px;overflow:visible" viewBox="0 0 4.4 4.4"><rect x="0.25" y="0.25" width="3.9000000000000004" height="3.9000000000000004" rx="0.5" fill="#fff" stroke="#b8c2c3" stroke-width="0.55"/></svg>
<div class="a" style="left:16.7px;top:297px;font-size:4.7px;line-height:4.7px;color:#16191f;transform:scaleX(1.0015);">Select all</div>
<div class="a" style="left:8.6px;top:305.5px;width:200px;height:0.6px;background:#eaeded"></div>
<svg class="a" style="left:9.6px;top:311.3px;width:4.4px;height:4.4px;overflow:visible" viewBox="0 0 4.4 4.4"><rect x="0.25" y="0.25" width="3.9000000000000004" height="3.9000000000000004" rx="0.5" fill="#fff" stroke="#b8c2c3" stroke-width="0.55"/></svg>
<div class="a" style="left:16.7px;top:312px;font-size:4.7px;line-height:4.7px;color:#16191f;transform:scaleX(0.9537);">IC (51)</div>
<svg class="a" style="left:9.6px;top:321.2px;width:4.4px;height:4.4px;overflow:visible" viewBox="0 0 4.4 4.4"><rect x="0.25" y="0.25" width="3.9000000000000004" height="3.9000000000000004" rx="0.5" fill="#fff" stroke="#b8c2c3" stroke-width="0.55"/></svg>
<div class="a" style="left:16.7px;top:322px;font-size:4.7px;line-height:4.7px;color:#16191f;transform:scaleX(0.9861);">resistor1 (51)</div>
<svg class="a" style="left:9.6px;top:331.0px;width:4.4px;height:4.4px;overflow:visible" viewBox="0 0 4.4 4.4"><rect x="0.25" y="0.25" width="3.9000000000000004" height="3.9000000000000004" rx="0.5" fill="#fff" stroke="#b8c2c3" stroke-width="0.55"/></svg>
<div class="a" style="left:16.7px;top:332px;font-size:4.7px;line-height:4.7px;color:#16191f;transform:scaleX(0.9861);">resistor2 (51)</div>
<div class="panel" style="left:221.6px;top:153.1px;width:651.2px;height:35.8px;"><div class="ph" style="height:35.8px;border:0;"></div></div>
<div class="a" style="left:228.8px;top:161px;font-size:5.5px;line-height:5.5px;color:#16191f;font-weight:700;transform:scaleX(1.0075);">Images</div>
<div class="a" style="left:249.9px;top:161px;font-size:5.5px;line-height:5.5px;color:#687078;transform:scaleX(1.0216);">(27)</div>
<div class="a" style="left:228.0px;top:175.2px;width:239.4px;height:9.5px;border:1px solid #bcc5c6;border-radius:1px;background:#fff"></div>
<svg class="a" style="left:231.9px;top:177.5px;width:4.6px;height:4.6px;overflow:visible" viewBox="0 0 10 10"><circle cx="4.2" cy="4.2" r="3.0" fill="none" stroke="#545b64" stroke-width="2.1"/><path d="M6.5 6.5 L9.4 9.4" stroke="#545b64" stroke-width="2.2"/></svg>
<div class="a" style="left:240.0px;top:178px;font-size:4.7px;line-height:4.7px;color:#687078;font-style:italic;transform:scaleX(0.9336);">Find images</div>
<div class="a" style="left:821.2px;top:159.4px;width:45px;height:10.4px;border:1px solid #959fa0;border-radius:1px;background:#fff"></div>
<div class="a" style="left:828.1px;top:164px;font-size:4.7px;line-height:4.7px;color:#16191f;font-weight:700;transform:scaleX(1.0343);">Start labeling</div>
<svg class="a" style="left:813.9px;top:177.3px;width:2.8px;height:4.8px;overflow:visible" viewBox="0 0 2.8 4.8"><path d="M2.5 0.3 L0.3 2.4 L2.5 4.5" fill="none" stroke="#aab7b8" stroke-width="0.6"/></svg>
<div class="a" style="left:824.2px;top:179px;font-size:4.7px;line-height:4.7px;color:#16191f;font-weight:700;">1</div>
<div class="a" style="left:833.7px;top:179px;font-size:4.7px;line-height:4.7px;color:#545b64;">2</div>
<div class="a" style="left:843.7px;top:179px;font-size:4.7px;line-height:4.7px;color:#545b64;">3</div>
<div class="a" style="left:852.9px;top:179px;font-size:4.7px;line-height:4.7px;color:#545b64;">...</div>
<svg class="a" style="left:863.2px;top:177.3px;width:2.8px;height:4.8px;overflow:visible" viewBox="0 0 2.8 4.8"><path d="M0.3 0.3 L2.5 2.4 L0.3 4.5" fill="none" stroke="#16191f" stroke-width="0.6"/></svg>
<div class="panel" style="left:221.6px;top:196.2px;width:212.3px;height:136.9px;"></div>
<svg class="a" style="left:255.3px;top:211.95px;width:145.7px;height:82.3px" viewBox="0 0 146 82" preserveAspectRatio="none"><use href="#pcb0"/></svg>
<div class="a" style="left:228.6px;top:204px;font-size:5.7px;line-height:5.7px;color:#16191f;transform:scaleX(1.0211);-webkit-text-stroke:0.08px currentColor">6_im_mask_IC.jpg</div>
<div class="a" style="left:319.0px;top:305px;font-size:4.7px;line-height:4.7px;color:#c0321c;transform:scaleX(1.0117);">Anomaly</div>
<div class="a" style="left:225.2px;top:311.79999999999995px;width:205.8px;height:0.6px;background:#eaeded"></div>
<svg class="a" style="left:229.1px;top:320.2px;width:2.7px;height:3px;overflow:visible" viewBox="0 0 2.7 3"><path d="M0 0 L2.7 1.5 L0 3Z" fill="#16191f"/></svg>
<div class="a" style="left:235.2px;top:320px;font-size:4.7px;line-height:4.7px;color:#16191f;transform:scaleX(0.9840);">Anomaly labels (1)</div>
<svg class="a" style="left:421.6px;top:319.79999999999995px;width:5.8px;height:4.2px;overflow:visible" viewBox="0 0 10 7"><path d="M0.3 3.5 Q5 -1.8 9.7 3.5 Q5 8.8 0.3 3.5Z" fill="#3f454c"/><circle cx="5" cy="3.5" r="1.9" fill="#e8eaea"/><circle cx="5" cy="3.5" r="1.0" fill="#3f454c"/></svg>
<div class="panel" style="left:440.9px;top:196.2px;width:212.3px;height:136.9px;"></div>
<svg class="a" style="left:474.59999999999997px;top:211.95px;width:145.7px;height:82.3px" viewBox="0 0 146 82" preserveAspectRatio="none"><use href="#pcb1"/></svg>
<div class="a" style="left:447.9px;top:204px;font-size:5.7px;line-height:5.7px;color:#16191f;transform:scaleX(1.0167);-webkit-text-stroke:0.08px currentColor">30_im_mask_IC.jpg</div>
<div class="a" style="left:538.3px;top:305px;font-size:4.7px;line-height:4.7px;color:#c0321c;transform:scaleX(1.0117);">Anomaly</div>
<div class="a" style="left:444.5px;top:311.79999999999995px;width:205.8px;height:0.6px;background:#eaeded"></div>
<svg class="a" style="left:448.4px;top:320.2px;width:2.7px;height:3px;overflow:visible" viewBox="0 0 2.7 3"><path d="M0 0 L2.7 1.5 L0 3Z" fill="#16191f"/></svg>
<div class="a" style="left:454.5px;top:320px;font-size:4.7px;line-height:4.7px;color:#16191f;transform:scaleX(0.9840);">Anomaly labels (1)</div>
<svg class="a" style="left:640.9px;top:319.79999999999995px;width:5.8px;height:4.2px;overflow:visible" viewBox="0 0 10 7"><path d="M0.3 3.5 Q5 -1.8 9.7 3.5 Q5 8.8 0.3 3.5Z" fill="#3f454c"/><circle cx="5" cy="3.5" r="1.9" fill="#e8eaea"/><circle cx="5" cy="3.5" r="1.0" fill="#3f454c"/></svg>
<div class="panel" style="left:660.5px;top:196.2px;width:212.3px;height:136.9px;"></div>
<svg class="a" style="left:694.2px;top:211.95px;width:145.7px;height:82.3px" viewBox="0 0 146 82" preserveAspectRatio="none"><use href="#pcb2"/></svg>
<div class="a" style="left:667.5px;top:204px;font-size:5.7px;line-height:5.7px;color:#16191f;transform:scaleX(1.0167);-webkit-text-stroke:0.08px currentColor">23_im_mask_IC.jpg</div>
<div class="a" style="left:757.9px;top:305px;font-size:4.7px;line-height:4.7px;color:#c0321c;transform:scaleX(1.0117);">Anomaly</div>
<div class="a" style="left:664.1px;top:311.79999999999995px;width:205.8px;height:0.6px;background:#eaeded"></div>
<svg class="a" style="left:668.0px;top:320.2px;width:2.7px;height:3px;overflow:visible" viewBox="0 0 2.7 3"><path d="M0 0 L2.7 1.5 L0 3Z" fill="#16191f"/></svg>
<div class="a" style="left:674.1px;top:320px;font-size:4.7px;line-height:4.7px;color:#16191f;transform:scaleX(0.9840);">Anomaly labels (1)</div>
<svg class="a" style="left:860.5px;top:319.79999999999995px;width:5.8px;height:4.2px;overflow:visible" viewBox="0 0 10 7"><path d="M0.3 3.5 Q5 -1.8 9.7 3.5 Q5 8.8 0.3 3.5Z" fill="#3f454c"/><circle cx="5" cy="3.5" r="1.9" fill="#e8eaea"/><circle cx="5" cy="3.5" r="1.0" fill="#3f454c"/></svg>
<div class="panel" style="left:221.6px;top:339.8px;width:212.3px;height:136.9px;"></div>
<svg class="a" style="left:255.3px;top:355.55px;width:145.7px;height:82.3px" viewBox="0 0 146 82" preserveAspectRatio="none"><use href="#pcb3"/></svg>
<div class="a" style="left:228.6px;top:348px;font-size:5.7px;line-height:5.7px;color:#16191f;transform:scaleX(1.0167);-webkit-text-stroke:0.08px currentColor">18_im_mask_IC.jpg</div>
<div class="a" style="left:319.0px;top:448px;font-size:4.7px;line-height:4.7px;color:#c0321c;transform:scaleX(1.0117);">Anomaly</div>
<div class="a" style="left:225.2px;top:455.4px;width:205.8px;height:0.6px;background:#eaeded"></div>
<svg class="a" style="left:229.1px;top:463.8px;width:2.7px;height:3px;overflow:visible" viewBox="0 0 2.7 3"><path d="M0 0 L2.7 1.5 L0 3Z" fill="#16191f"/></svg>
<div class="a" style="left:235.2px;top:464px;font-size:4.7px;line-height:4.7px;color:#16191f;transform:scaleX(0.9840);">Anomaly labels (1)</div>
<svg class="a" style="left:421.6px;top:463.4px;width:5.8px;height:4.2px;overflow:visible" viewBox="0 0 10 7"><path d="M0.3 3.5 Q5 -1.8 9.7 3.5 Q5 8.8 0.3 3.5Z" fill="#3f454c"/><circle cx="5" cy="3.5" r="1.9" fill="#e8eaea"/><circle cx="5" cy="3.5" r="1.0" fill="#3f454c"/></svg>
<div class="panel" style="left:440.9px;top:339.8px;width:212.3px;height:136.9px;"></div>
<svg class="a" style="left:474.59999999999997px;top:355.55px;width:145.7px;height:82.3px" viewBox="0 0 146 82" preserveAspectRatio="none"><use href="#pcb4"/></svg>
<div class="a" style="left:447.9px;top:348px;font-size:5.7px;line-height:5.7px;color:#16191f;transform:scaleX(1.0167);-webkit-text-stroke:0.08px currentColor">39_im_mask_IC.jpg</div>
<div class="a" style="left:538.3px;top:448px;font-size:4.7px;line-height:4.7px;color:#c0321c;transform:scaleX(1.0117);">Anomaly</div>
<div class="a" style="left:444.5px;top:455.4px;width:205.8px;height:0.6px;background:#eaeded"></div>
<svg class="a" style="left:448.4px;top:463.8px;width:2.7px;height:3px;overflow:visible" viewBox="0 0 2.7 3"><path d="M0 0 L2.7 1.5 L0 3Z" fill="#16191f"/></svg>
<div class="a" style="left:454.5px;top:464px;font-size:4.7px;line-height:4.7px;color:#16191f;transform:scaleX(0.9840);">Anomaly labels (1)</div>
<svg class="a" style="left:640.9px;top:463.4px;width:5.8px;height:4.2px;overflow:visible" viewBox="0 0 10 7"><path d="M0.3 3.5 Q5 -1.8 9.7 3.5 Q5 8.8 0.3 3.5Z" fill="#3f454c"/><circle cx="5" cy="3.5" r="1.9" fill="#e8eaea"/><circle cx="5" cy="3.5" r="1.0" fill="#3f454c"/></svg>
<div class="panel" style="left:660.5px;top:339.8px;width:212.3px;height:136.9px;"></div>
<svg class="a" style="left:694.2px;top:355.55px;width:145.7px;height:82.3px" viewBox="0 0 146 82" preserveAspectRatio="none"><use href="#pcb5"/></svg>
<div class="a" style="left:667.5px;top:348px;font-size:5.7px;line-height:5.7px;color:#16191f;transform:scaleX(1.0211);-webkit-text-stroke:0.08px currentColor">1_im_mask_IC.jpg</div>
<div class="a" style="left:757.9px;top:448px;font-size:4.7px;line-height:4.7px;color:#c0321c;transform:scaleX(1.0117);">Anomaly</div>
<div class="a" style="left:664.1px;top:455.4px;width:205.8px;height:0.6px;background:#eaeded"></div>
<svg class="a" style="left:668.0px;top:463.8px;width:2.7px;height:3px;overflow:visible" viewBox="0 0 2.7 3"><path d="M0 0 L2.7 1.5 L0 3Z" fill="#16191f"/></svg>
<div class="a" style="left:674.1px;top:464px;font-size:4.7px;line-height:4.7px;color:#16191f;transform:scaleX(0.9840);">Anomaly labels (1)</div>
<svg class="a" style="left:860.5px;top:463.4px;width:5.8px;height:4.2px;overflow:visible" viewBox="0 0 10 7"><path d="M0.3 3.5 Q5 -1.8 9.7 3.5 Q5 8.8 0.3 3.5Z" fill="#3f454c"/><circle cx="5" cy="3.5" r="1.9" fill="#e8eaea"/><circle cx="5" cy="3.5" r="1.0" fill="#3f454c"/></svg>
<div class="a" style="left:741.6px;top:29.4px;width:88.0px;height:90.6px;background:#fff;border:0.5px solid #d5dbdb;box-shadow:0 1px 1.5px rgba(0,28,36,.2)"></div>
<div class="a" style="left:748.8px;top:33px;font-size:4.7px;line-height:4.7px;color:#16191f;transform:scaleX(1.0112);">Add images</div>
<div class="a" style="left:752.8px;top:43px;font-size:4.7px;line-height:4.7px;color:#16191f;transform:scaleX(1.0064);">Add images to training dataset</div>
<div class="a" style="left:752.8px;top:53px;font-size:4.7px;line-height:4.7px;color:#aab7b8;transform:scaleX(0.9937);">Add images to test dataset</div>
<div class="a" style="left:742.2px;top:58.6px;width:86.6px;height:0.6px;background:#eaeded"></div>
<div class="a" style="left:748.8px;top:63px;font-size:4.7px;line-height:4.7px;color:#16191f;transform:scaleX(0.9988);">Create dataset</div>
<div class="a" style="left:752.8px;top:73px;font-size:4.7px;line-height:4.7px;color:#aab7b8;transform:scaleX(0.9947);">Create training dataset</div>
<div class="a" style="left:741.6px;top:79.2px;width:88.0px;height:10.4px;background:#f0f1f0;border:1px solid #44789c"></div>
<div class="a" style="left:752.8px;top:83px;font-size:4.7px;line-height:4.7px;color:#16191f;transform:scaleX(0.9921);">Create test dataset</div>
<div class="a" style="left:748.8px;top:93px;font-size:4.7px;line-height:4.7px;color:#16191f;transform:scaleX(1.0160);">Delete dataset</div>
<div class="a" style="left:752.8px;top:103px;font-size:4.7px;line-height:4.7px;color:#16191f;transform:scaleX(1.0056);">Delete training dataset</div>
<div class="a" style="left:752.8px;top:113px;font-size:4.7px;line-height:4.7px;color:#aab7b8;transform:scaleX(1.0053);">Delete test dataset</div>
</div></body></html>
